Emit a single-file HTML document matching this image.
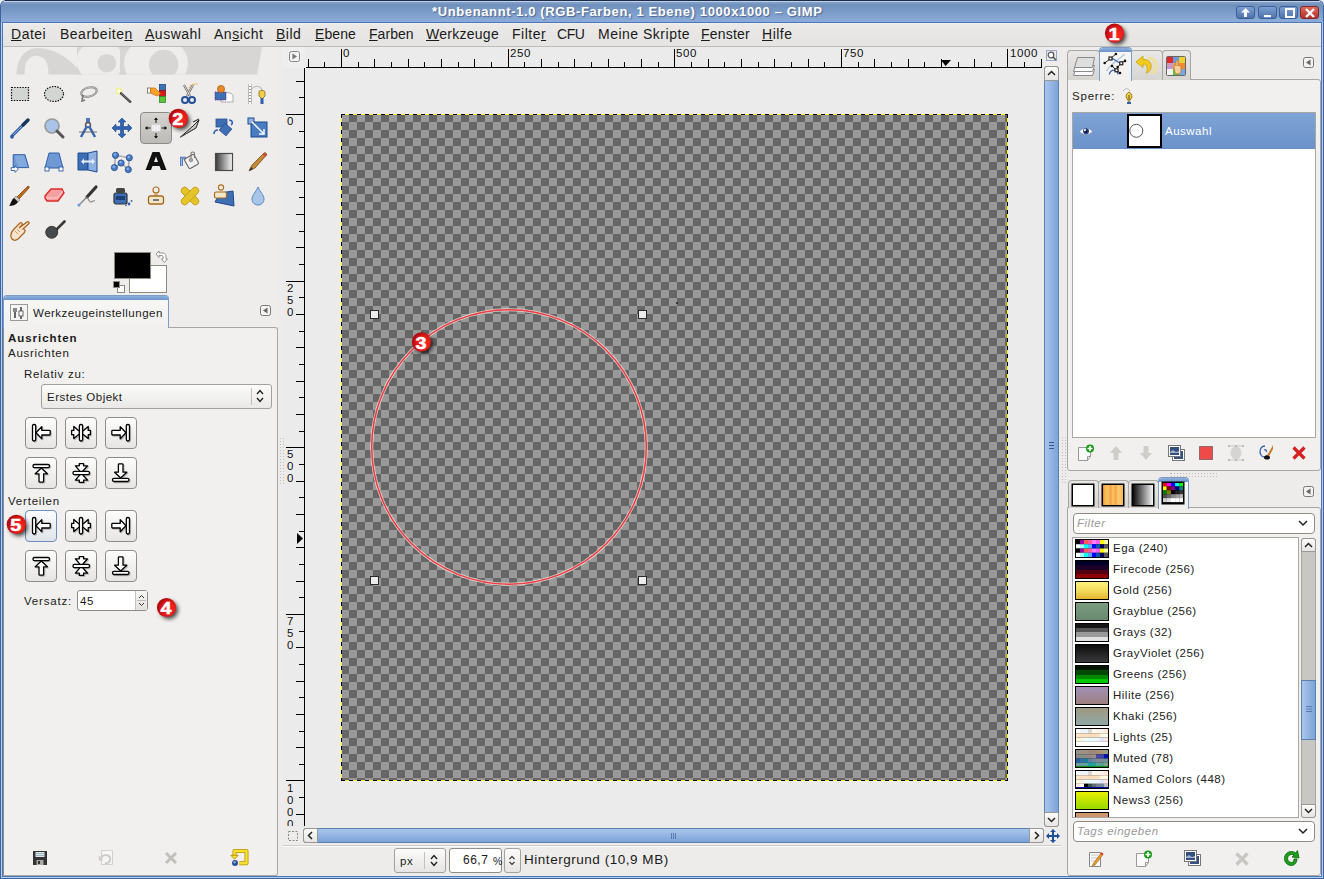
<!DOCTYPE html>
<html><head><meta charset="utf-8">
<style>
*{margin:0;padding:0;box-sizing:border-box}
html,body{width:1324px;height:879px;overflow:hidden;background:#f0efed;font-family:"Liberation Sans",sans-serif;color:#1a1a1a}
.a{position:absolute}
.t{position:absolute;white-space:nowrap;font-size:13px;line-height:15px}
#frame{left:0;top:0;width:1324px;height:879px;background:#3d629e;border-radius:6px 6px 0 0}
#frame2{left:1px;top:1px;width:1322px;height:877px;background:#b2cef0;border-radius:5px 5px 0 0}
#frame3{left:2px;top:2px;width:1320px;height:875px;background:#4a78b8;border-radius:4px 4px 0 0}
#title{left:1px;top:1px;width:1322px;height:21px;background:linear-gradient(#8ea8cc 0,#7090bc 4px,#8cacda);border-radius:5px 5px 0 0}
#ttext{left:432px;top:4px;color:#fff;font-weight:bold;font-size:13px;letter-spacing:0.62px;text-shadow:1px 1px 1px rgba(40,60,100,0.6)}
.wb{top:6px;width:19px;height:13px;border-radius:3px;background:linear-gradient(#7da0d2,#4d73ad);border:1px solid #3a5f98}
#menubar{left:3px;top:23px;width:1318px;height:24px;background:linear-gradient(#f3f0ec 0,#eae9e7 2px,#e5e4e2);border-bottom:1px solid #bebcb9}
.m{top:27px;font-size:14px;letter-spacing:0.5px}
.rl{font-size:11.5px;line-height:11px;color:#111;letter-spacing:0.6px}
.m u{text-decoration:underline;text-underline-offset:1px;text-decoration-thickness:1px}
#content{left:3px;top:47px;width:1318px;height:829px;background:#edecea}
</style></head><body>
<div id="frame" class="a"></div><div id="frame2" class="a"></div><div id="frame3" class="a"></div>
<div id="title" class="a"></div><div class="a" style="left:5px;top:0;width:1314px;height:1px;background:#1f2b42"></div><div class="a" style="left:4px;top:1px;width:1316px;height:1px;background:#b9d2f2"></div>
<div id="ttext" class="t">*Unbenannt-1.0 (RGB-Farben, 1 Ebene) 1000x1000 – GIMP</div>
<div class="a wb" style="left:1236px"></div>
<div class="a wb" style="left:1258px"></div>
<div class="a wb" style="left:1279px"></div>
<div class="a wb" style="left:1300px;background:linear-gradient(#e06a5e,#b3302a);border-color:#8a2520"></div>
<svg class="a" style="left:1236px;top:5px" width="84" height="15">
<path d="M9.5 3 L14 7.5 L11 7.5 L11 12 L8 12 L8 7.5 L5 7.5Z" fill="#fff"/>
<rect x="28" y="10" width="7" height="2.2" fill="#fff"/>
<rect x="50" y="4" width="8" height="8" fill="none" stroke="#fff" stroke-width="2"/>
<path d="M70 4 L78 12 M78 4 L70 12" stroke="#fff" stroke-width="2.4"/>
</svg>
<div id="menubar" class="a"></div>
<div class="t m" style="left:11px"><u>D</u>atei</div>
<div class="t m" style="left:60px">Bearbeite<u>n</u></div>
<div class="t m" style="left:145px"><u>A</u>uswahl</div>
<div class="t m" style="left:214px">An<u>s</u>icht</div>
<div class="t m" style="left:276px"><u>B</u>ild</div>
<div class="t m" style="left:315px;letter-spacing:0.1px"><u>E</u>bene</div>
<div class="t m" style="left:369px;letter-spacing:0.05px"><u>F</u>arben</div>
<div class="t m" style="left:426px;letter-spacing:0.27px"><u>W</u>erkzeuge</div>
<div class="t m" style="left:512px">Filte<u>r</u></div>
<div class="t m" style="left:557px;letter-spacing:-0.4px">CFU</div>
<div class="t m" style="left:598px">Meine Skripte</div>
<div class="t m" style="left:701px;letter-spacing:0.2px"><u>F</u>enster</div>
<div class="t m" style="left:762px"><u>H</u>ilfe</div>
<div id="content" class="a"></div>

<!-- TOOLBOX -->
<div class="a" style="left:3px;top:47px;width:275px;height:829px;background:#efedeb"></div>
<svg class="a" style="left:0;top:47px" width="280" height="28">
<defs><clipPath id="wc"><rect x="0" y="0" width="280" height="27.6"/></clipPath></defs>
<g clip-path="url(#wc)">
<path fill="#d7d6d4" d="M16.4 28 C17 10 26 1 38 1 C52 1 70 10 83 28 L48.3 28 L48.3 24 C48.3 14 43 8.8 36.5 8.8 C30 8.8 24.7 14 24.7 24 L24.7 28 Z"/>
<rect x="77" y="0" width="50" height="28" fill="#d7d6d4"/>
<ellipse cx="100" cy="14" rx="23.5" ry="21" fill="#efedeb"/>
<circle cx="106.8" cy="16.2" r="9.3" fill="#d7d6d4"/>
<path fill="#d7d6d4" d="M120 0 L262 0 L257 28 L120 28Z"/>
<ellipse cx="156" cy="16" rx="32" ry="26" fill="#efedeb"/>
<circle cx="163.6" cy="17.4" r="14.7" fill="#d7d6d4"/>
</g>
</svg>
<!--IMGWIN-->
<div class="a" style="left:278px;top:47px;width:785px;height:829px;background:#edecea"></div>
<div class="a" style="left:283px;top:47px;width:760px;height:780px;background:#ebebeb"></div>
<div class="a" style="left:283px;top:47px;width:22px;height:21px;background:#eeeeee"></div>
<svg class="a" style="left:289px;top:51px" width="12" height="12"><rect x="0.5" y="0.5" width="10" height="10" rx="2" fill="#f3f3f3" stroke="#888"/><path d="M3.5 2.5 L8 5.5 L3.5 8.5Z" fill="#777"/></svg>
<div class="a" style="left:306px;top:67px;width:736px;height:1px;background:#000"></div>
<div class="a" style="left:304px;top:68px;width:1px;height:758px;background:#000"></div>
<div class="a" style="left:308px;top:59px;width:1px;height:8px;background:#000"></div>
<div class="a" style="left:324px;top:62px;width:1px;height:5px;background:#000"></div>
<div class="a" style="left:341px;top:49px;width:1px;height:18px;background:#000"></div>
<div class="a" style="left:358px;top:62px;width:1px;height:5px;background:#000"></div>
<div class="a" style="left:374px;top:59px;width:1px;height:8px;background:#000"></div>
<div class="a" style="left:391px;top:62px;width:1px;height:5px;background:#000"></div>
<div class="a" style="left:408px;top:59px;width:1px;height:8px;background:#000"></div>
<div class="a" style="left:424px;top:62px;width:1px;height:5px;background:#000"></div>
<div class="a" style="left:441px;top:59px;width:1px;height:8px;background:#000"></div>
<div class="a" style="left:458px;top:62px;width:1px;height:5px;background:#000"></div>
<div class="a" style="left:474px;top:59px;width:1px;height:8px;background:#000"></div>
<div class="a" style="left:491px;top:62px;width:1px;height:5px;background:#000"></div>
<div class="a" style="left:508px;top:49px;width:1px;height:18px;background:#000"></div>
<div class="a" style="left:524px;top:62px;width:1px;height:5px;background:#000"></div>
<div class="a" style="left:541px;top:59px;width:1px;height:8px;background:#000"></div>
<div class="a" style="left:558px;top:62px;width:1px;height:5px;background:#000"></div>
<div class="a" style="left:574px;top:59px;width:1px;height:8px;background:#000"></div>
<div class="a" style="left:591px;top:62px;width:1px;height:5px;background:#000"></div>
<div class="a" style="left:608px;top:59px;width:1px;height:8px;background:#000"></div>
<div class="a" style="left:624px;top:62px;width:1px;height:5px;background:#000"></div>
<div class="a" style="left:641px;top:59px;width:1px;height:8px;background:#000"></div>
<div class="a" style="left:658px;top:62px;width:1px;height:5px;background:#000"></div>
<div class="a" style="left:674px;top:49px;width:1px;height:18px;background:#000"></div>
<div class="a" style="left:691px;top:62px;width:1px;height:5px;background:#000"></div>
<div class="a" style="left:708px;top:59px;width:1px;height:8px;background:#000"></div>
<div class="a" style="left:724px;top:62px;width:1px;height:5px;background:#000"></div>
<div class="a" style="left:741px;top:59px;width:1px;height:8px;background:#000"></div>
<div class="a" style="left:758px;top:62px;width:1px;height:5px;background:#000"></div>
<div class="a" style="left:774px;top:59px;width:1px;height:8px;background:#000"></div>
<div class="a" style="left:791px;top:62px;width:1px;height:5px;background:#000"></div>
<div class="a" style="left:808px;top:59px;width:1px;height:8px;background:#000"></div>
<div class="a" style="left:824px;top:62px;width:1px;height:5px;background:#000"></div>
<div class="a" style="left:841px;top:49px;width:1px;height:18px;background:#000"></div>
<div class="a" style="left:858px;top:62px;width:1px;height:5px;background:#000"></div>
<div class="a" style="left:874px;top:59px;width:1px;height:8px;background:#000"></div>
<div class="a" style="left:891px;top:62px;width:1px;height:5px;background:#000"></div>
<div class="a" style="left:908px;top:59px;width:1px;height:8px;background:#000"></div>
<div class="a" style="left:924px;top:62px;width:1px;height:5px;background:#000"></div>
<div class="a" style="left:941px;top:59px;width:1px;height:8px;background:#000"></div>
<div class="a" style="left:958px;top:62px;width:1px;height:5px;background:#000"></div>
<div class="a" style="left:974px;top:59px;width:1px;height:8px;background:#000"></div>
<div class="a" style="left:991px;top:62px;width:1px;height:5px;background:#000"></div>
<div class="a" style="left:1007px;top:49px;width:1px;height:18px;background:#000"></div>
<div class="a" style="left:1024px;top:62px;width:1px;height:5px;background:#000"></div>
<div class="a" style="left:1041px;top:59px;width:1px;height:8px;background:#000"></div>
<div class="a" style="left:1041px;top:59px;width:1px;height:8px;background:#000"></div>
<div class="t rl" style="left:343px;top:48px">0</div>
<div class="t rl" style="left:510px;top:48px">250</div>
<div class="t rl" style="left:676px;top:48px">500</div>
<div class="t rl" style="left:843px;top:48px">750</div>
<div class="t rl" style="left:1010px;top:48px">1000</div>
<div class="a" style="left:296px;top:81px;width:8px;height:1px;background:#000"></div>
<div class="a" style="left:299px;top:97px;width:5px;height:1px;background:#000"></div>
<div class="a" style="left:286px;top:114px;width:18px;height:1px;background:#000"></div>
<div class="a" style="left:299px;top:131px;width:5px;height:1px;background:#000"></div>
<div class="a" style="left:296px;top:147px;width:8px;height:1px;background:#000"></div>
<div class="a" style="left:299px;top:164px;width:5px;height:1px;background:#000"></div>
<div class="a" style="left:296px;top:181px;width:8px;height:1px;background:#000"></div>
<div class="a" style="left:299px;top:197px;width:5px;height:1px;background:#000"></div>
<div class="a" style="left:296px;top:214px;width:8px;height:1px;background:#000"></div>
<div class="a" style="left:299px;top:231px;width:5px;height:1px;background:#000"></div>
<div class="a" style="left:296px;top:247px;width:8px;height:1px;background:#000"></div>
<div class="a" style="left:299px;top:264px;width:5px;height:1px;background:#000"></div>
<div class="a" style="left:286px;top:281px;width:18px;height:1px;background:#000"></div>
<div class="a" style="left:299px;top:297px;width:5px;height:1px;background:#000"></div>
<div class="a" style="left:296px;top:314px;width:8px;height:1px;background:#000"></div>
<div class="a" style="left:299px;top:331px;width:5px;height:1px;background:#000"></div>
<div class="a" style="left:296px;top:347px;width:8px;height:1px;background:#000"></div>
<div class="a" style="left:299px;top:364px;width:5px;height:1px;background:#000"></div>
<div class="a" style="left:296px;top:381px;width:8px;height:1px;background:#000"></div>
<div class="a" style="left:299px;top:397px;width:5px;height:1px;background:#000"></div>
<div class="a" style="left:296px;top:414px;width:8px;height:1px;background:#000"></div>
<div class="a" style="left:299px;top:431px;width:5px;height:1px;background:#000"></div>
<div class="a" style="left:286px;top:447px;width:18px;height:1px;background:#000"></div>
<div class="a" style="left:299px;top:464px;width:5px;height:1px;background:#000"></div>
<div class="a" style="left:296px;top:481px;width:8px;height:1px;background:#000"></div>
<div class="a" style="left:299px;top:497px;width:5px;height:1px;background:#000"></div>
<div class="a" style="left:296px;top:514px;width:8px;height:1px;background:#000"></div>
<div class="a" style="left:299px;top:531px;width:5px;height:1px;background:#000"></div>
<div class="a" style="left:296px;top:547px;width:8px;height:1px;background:#000"></div>
<div class="a" style="left:299px;top:564px;width:5px;height:1px;background:#000"></div>
<div class="a" style="left:296px;top:581px;width:8px;height:1px;background:#000"></div>
<div class="a" style="left:299px;top:597px;width:5px;height:1px;background:#000"></div>
<div class="a" style="left:286px;top:614px;width:18px;height:1px;background:#000"></div>
<div class="a" style="left:299px;top:631px;width:5px;height:1px;background:#000"></div>
<div class="a" style="left:296px;top:647px;width:8px;height:1px;background:#000"></div>
<div class="a" style="left:299px;top:664px;width:5px;height:1px;background:#000"></div>
<div class="a" style="left:296px;top:681px;width:8px;height:1px;background:#000"></div>
<div class="a" style="left:299px;top:697px;width:5px;height:1px;background:#000"></div>
<div class="a" style="left:296px;top:714px;width:8px;height:1px;background:#000"></div>
<div class="a" style="left:299px;top:731px;width:5px;height:1px;background:#000"></div>
<div class="a" style="left:296px;top:747px;width:8px;height:1px;background:#000"></div>
<div class="a" style="left:299px;top:764px;width:5px;height:1px;background:#000"></div>
<div class="a" style="left:286px;top:780px;width:18px;height:1px;background:#000"></div>
<div class="a" style="left:299px;top:797px;width:5px;height:1px;background:#000"></div>
<div class="a" style="left:296px;top:814px;width:8px;height:1px;background:#000"></div>
<div class="t rl" style="left:287px;top:115px;line-height:12px;letter-spacing:0;clip-path:inset(0 0 0px 0)">0</div>
<div class="t rl" style="left:287px;top:282px;line-height:12px;letter-spacing:0;clip-path:inset(0 0 0px 0)">2<br>5<br>0</div>
<div class="t rl" style="left:287px;top:448px;line-height:12px;letter-spacing:0;clip-path:inset(0 0 0px 0)">5<br>0<br>0</div>
<div class="t rl" style="left:287px;top:615px;line-height:12px;letter-spacing:0;clip-path:inset(0 0 0px 0)">7<br>5<br>0</div>
<div class="t rl" style="left:287px;top:782px;line-height:12px;letter-spacing:0;clip-path:inset(0 0 4px 0)">1<br>0<br>0<br>0</div>
<!-- canvas -->
<div class="a" style="left:341px;top:114px;width:667px;height:667px;background:repeating-conic-gradient(#666 0 25%,#999 0 50%) 0 0/16px 16px"></div>
<div class="a" style="left:341px;top:114px;width:667px;height:1px;background:repeating-linear-gradient(90deg,#000 0 4px,#ff0 4px 8px)"></div>
<div class="a" style="left:341px;top:780px;width:667px;height:1px;background:repeating-linear-gradient(90deg,#000 0 4px,#ff0 4px 8px)"></div>
<div class="a" style="left:341px;top:114px;width:1px;height:667px;background:repeating-linear-gradient(180deg,#000 0 4px,#ff0 4px 8px)"></div>
<div class="a" style="left:1007px;top:114px;width:1px;height:667px;background:repeating-linear-gradient(180deg,#000 0 4px,#ff0 4px 8px)"></div>
<svg class="a" style="left:341px;top:114px" width="667" height="667">
<circle cx="168" cy="333" r="137.3" fill="none" stroke="#f2f2f2" stroke-width="3" opacity="0.75"/>
<circle cx="168" cy="333" r="137.3" fill="none" stroke="#f4383c" stroke-width="1.5"/>
<rect x="29.5" y="196.5" width="8" height="8" fill="#ececec" stroke="#2a2a2a"/>
<rect x="297.5" y="196.5" width="8" height="8" fill="#ececec" stroke="#2a2a2a"/>
<rect x="29.5" y="462.5" width="8" height="8" fill="#ececec" stroke="#2a2a2a"/>
<rect x="297.5" y="462.5" width="8" height="8" fill="#ececec" stroke="#2a2a2a"/>
</svg>
<svg class="a" style="left:930px;top:55px" width="30" height="14"><path d="M11 5 L21 5 L15.6 11Z" fill="#000"/></svg>
<svg class="a" style="left:290px;top:528px" width="16" height="20"><path d="M7 5 L13 10.5 L7 16Z" fill="#000"/></svg>
<div class="a" style="left:676px;top:302px;width:2px;height:2px;background:#222;border-radius:1px"></div>
<!-- scrollbars -->
<svg class="a" style="left:1046px;top:50px" width="12" height="12"><rect x="0.5" y="0.5" width="10" height="10" fill="none" stroke="#3a6ab0" stroke-dasharray="1 1"/><circle cx="5" cy="5" r="2.8" fill="#fff" stroke="#555" stroke-width="1.2"/><path d="M7 7 L10 10" stroke="#555" stroke-width="1.6"/></svg>
<div class="a" style="left:1044px;top:66px;width:15px;height:761px;border:1px solid #5b80b2;border-radius:3px;background:linear-gradient(90deg,#a9c6ec,#7ea3d8)"></div>
<div class="a" style="left:1044px;top:66px;width:15px;height:15px;border:1px solid #9a9894;border-radius:3px 3px 0 0;background:linear-gradient(#fbfbfa,#e6e5e3)"></div>
<svg class="a" style="left:1044px;top:66px" width="15" height="15"><path d="M4 9 L7.5 5.5 L11 9" fill="none" stroke="#222" stroke-width="1.5"/></svg>
<div class="a" style="left:1044px;top:812px;width:15px;height:15px;border:1px solid #9a9894;border-radius:0 0 3px 3px;background:linear-gradient(#fbfbfa,#e6e5e3)"></div>
<svg class="a" style="left:1044px;top:812px" width="15" height="15"><path d="M4 6 L7.5 9.5 L11 6" fill="none" stroke="#222" stroke-width="1.5"/></svg>
<div class="a" style="left:303px;top:828px;width:741px;height:15px;border:1px solid #5b80b2;border-radius:3px;background:linear-gradient(#a9c6ec,#7ea3d8)"></div>
<div class="a" style="left:303px;top:828px;width:15px;height:15px;border:1px solid #9a9894;border-radius:3px 0 0 3px;background:linear-gradient(#fbfbfa,#e6e5e3)"></div>
<svg class="a" style="left:303px;top:828px" width="15" height="15"><path d="M9 4 L5.5 7.5 L9 11" fill="none" stroke="#222" stroke-width="1.5"/></svg>
<div class="a" style="left:1029px;top:828px;width:15px;height:15px;border:1px solid #9a9894;border-radius:0 3px 3px 0;background:linear-gradient(#fbfbfa,#e6e5e3)"></div>
<svg class="a" style="left:1029px;top:828px" width="15" height="15"><path d="M6 4 L9.5 7.5 L6 11" fill="none" stroke="#222" stroke-width="1.5"/></svg>
<svg class="a" style="left:1048px;top:440px" width="8" height="10"><path d="M1 2.5 L6 2.5 M1 5.5 L6 5.5 M1 8.5 L6 8.5" stroke="#3a5a8a" stroke-width="1"/></svg>
<svg class="a" style="left:670px;top:832px" width="8" height="8"><path d="M1.5 1 L1.5 7 M3.5 1 L3.5 7 M5.5 1 L5.5 7" stroke="#4a6fa6" stroke-width="0.8"/></svg>
<svg class="a" style="left:287px;top:830px" width="12" height="12"><rect x="1.5" y="1.5" width="9" height="9" fill="none" stroke="#888" stroke-dasharray="2 1.5"/></svg>
<svg class="a" style="left:1045px;top:828px" width="16" height="16"><path d="M8 1 L11 4 L9 4 L9 7 L12 7 L12 5 L15 8 L12 11 L12 9 L9 9 L9 12 L11 12 L8 15 L5 12 L7 12 L7 9 L4 9 L4 11 L1 8 L4 5 L4 7 L7 7 L7 4 L5 4Z" fill="#1f4f98"/></svg>
<div class="a" style="left:283px;top:845px;width:778px;height:1px;background:#cfcdca"></div>
<div class="a" style="left:283px;top:846px;width:778px;height:1px;background:#fbfbfa"></div>
<!-- status -->
<div class="a" style="left:394px;top:848px;width:52px;height:25px;border:1px solid #a4a19d;border-radius:3px;background:linear-gradient(#fbfbfa,#e6e5e3)"></div>
<div class="a" style="left:424px;top:852px;width:1px;height:17px;background:#c4c1bd"></div>
<div class="t" style="left:400px;top:854px;font-size:11.5px;letter-spacing:0.5px">px</div>
<svg class="a" style="left:428px;top:852px" width="12" height="17"><path d="M3 7 L6 3.5 L9 7 M3 10 L6 13.5 L9 10" fill="none" stroke="#222" stroke-width="1.4"/></svg>
<div class="a" style="left:449px;top:848px;width:53px;height:25px;border:1px solid #8f8c88;border-radius:3px;background:#fff"></div>
<div class="t" style="left:463px;top:853px;font-size:12px;letter-spacing:0.5px">66,7</div><div class="t" style="left:493px;top:854px;font-size:10.5px">%</div>
<div class="a" style="left:504px;top:848px;width:17px;height:25px;border:1px solid #a4a19d;border-radius:3px;background:linear-gradient(#fbfbfa,#e6e5e3)"></div>
<svg class="a" style="left:506px;top:852px" width="12" height="17"><path d="M3.5 7 L6 4.5 L8.5 7 M3.5 10 L6 12.5 L8.5 10" fill="none" stroke="#333" stroke-width="1.1"/></svg>
<div class="t" style="left:524px;top:852px;font-size:13.5px;letter-spacing:0.53px">Hintergrund (10,9 MB)</div>
<!--/IMGWIN-->
<!--DOCK-->
<div class="a" style="left:1063px;top:47px;width:258px;height:829px;background:#edecea"></div>
<div class="a" style="left:1067px;top:79px;width:254px;height:392px;border:1px solid #a9a6a2;border-radius:0 3px 3px 3px;background:#f1f0ee"></div>
<div class="a" style="left:1067px;top:50px;width:33px;height:30px;border:1px solid #a8a6a2;border-bottom:none;border-radius:4px 4px 0 0;background:linear-gradient(#e9e8e6,#d6d5d2)"></div>
<div class="a" style="left:1130px;top:50px;width:33px;height:30px;border:1px solid #a8a6a2;border-bottom:none;border-radius:4px 4px 0 0;background:linear-gradient(#e9e8e6,#d6d5d2)"></div>
<div class="a" style="left:1162px;top:50px;width:29px;height:30px;border:1px solid #a8a6a2;border-bottom:none;border-radius:4px 4px 0 0;background:linear-gradient(#e9e8e6,#d6d5d2)"></div>
<div class="a" style="left:1099px;top:47px;width:33px;height:34px;border:1px solid #7d9cc6;border-bottom:none;border-radius:4px 4px 0 0;background:linear-gradient(#f7f7f6,#f1f0ee)"></div><div class="a" style="left:1100px;top:48px;width:31px;height:4px;border-radius:3px 3px 0 0;background:linear-gradient(#8eb0de,#6b93cc)"></div>
<svg class="a" style="left:1071px;top:55px" width="26" height="22"><g stroke="#8a8a8a" stroke-width="1"><path d="M4.5 14.5 L23.5 14.5 L21.5 20.5 L2.5 20.5Z" fill="#fafafa"/><path d="M4.5 10.5 L23.5 10.5 L21.5 16.5 L2.5 16.5Z" fill="#fafafa"/><path d="M6.5 2.5 L23.5 2.5 L21.5 12.5 L3.5 12.5Z" fill="#dedede"/></g></svg>
<svg class="a" style="left:1100px;top:50px" width="30" height="28"><path d="M24.7 4.3 C18 10 10 14 6.5 21.2" fill="none" stroke="#b0c6e4" stroke-width="1.3"/><path d="M10.5 8.5 C14 8 17 12.5 21.3 13.3" fill="none" stroke="#3a66b0" stroke-width="1.2"/><path d="M9.2 24.5 C10 21 13 19.5 16.5 20.3 L18.3 24.5" fill="none" stroke="#3a66b0" stroke-width="1.2"/><path d="M4.7 13 L10.5 8.5 L15.9 4 M17.7 17 L21.3 13.3 L25 10.9 M12 16 L16.5 20.3 L20 23" fill="none" stroke="#111" stroke-width="0.9"/><g fill="#111"><circle cx="4.7" cy="13" r="1.3"/><circle cx="15.9" cy="4" r="1.3"/><circle cx="17.7" cy="17" r="1.3"/><circle cx="25" cy="10.9" r="1.3"/><circle cx="12" cy="16" r="1.3"/><circle cx="20" cy="23" r="1.3"/></g><g fill="#fff" stroke="#111" stroke-width="1.1"><rect x="9" y="7" width="3" height="3"/><rect x="19.8" y="11.8" width="3" height="3"/><rect x="15" y="18.8" width="3" height="3"/></g></svg>
<svg class="a" style="left:1134px;top:54px" width="26" height="22"><path d="M14 4 C20 4 23 9 22 14 C21 18 18 19 17 19" fill="none" stroke="#efe0a0" stroke-width="3.2"/><path d="M2 8 L9 2 L9 5.5 C15 5 18 9 17 14 C16 17 14 19 12 19 C14 16 14 10 9 10 L9 13.5 Z" fill="#f3cc1a" stroke="#c8a010" stroke-width="0.8"/></svg>
<svg class="a" style="left:1166px;top:56px" width="20" height="20"><rect x="1" y="1" width="6" height="6" fill="#e02828"/><rect x="7" y="1" width="6" height="6" fill="#6a9ad8"/><rect x="13" y="1" width="6" height="6" fill="#f0d030"/><rect x="1" y="7" width="6" height="6" fill="#c898c8"/><rect x="7" y="7" width="6" height="6" fill="#e8a050"/><rect x="13" y="7" width="6" height="6" fill="#f08a30"/><rect x="1" y="13" width="6" height="6" fill="#f2f2f2"/><rect x="7" y="13" width="6" height="6" fill="#60c040"/><rect x="13" y="13" width="6" height="6" fill="#78a8e0"/><rect x="0.5" y="0.5" width="19" height="19" fill="none" stroke="#666" rx="1"/><path d="M9 17 L8 10 C8 8 10 8 10 10 L10 6 C10 4 12 4 12 6 L12 10 C13 9 15 10 15 11 L15 15 C15 17 13 18 11 18Z" fill="#f8d0a0" stroke="#c87820" stroke-width="0.8"/></svg>
<svg class="a" style="left:1303px;top:57px" width="12" height="12"><rect x="0.5" y="0.5" width="10" height="10" rx="2" fill="#f3f2f0" stroke="#777"/><path d="M3 5.5 L7.5 2.5 L7.5 8.5Z" fill="#666"/></svg>
<div class="t" style="left:1072px;top:89px;font-size:11.5px;letter-spacing:0.8px">Sperre:</div>
<svg class="a" style="left:1120px;top:87px" width="18" height="18"><path d="M3 4 C5 1 9 1 10 4" fill="none" stroke="#aaa" stroke-width="0.8"/><path d="M9 5 C7 6 6 8 6 10 L9 15 L12 10 C12 8 11 6 9 5Z" fill="#f0d040" stroke="#907010" stroke-width="0.9"/><path d="M9 8 L9 13" stroke="#333" stroke-width="0.8"/><rect x="7" y="15" width="4" height="2" fill="#2f5fa8"/></svg>
<div class="a" style="left:1072px;top:112px;width:244px;height:326px;border:1px solid #a9a6a2;background:#fff"></div>
<div class="a" style="left:1073px;top:113px;width:242px;height:36px;background:linear-gradient(#7fa3d6,#6a91c9)"></div>
<svg class="a" style="left:1079px;top:125px" width="14" height="12"><path d="M0.8 6.5 C3.5 2.5 10.5 2.5 13.2 6.5 C10.5 10.5 3.5 10.5 0.8 6.5Z" fill="#fff" stroke="#999" stroke-width="0.6"/><circle cx="7" cy="6.3" r="3" fill="#1f3f8a"/><circle cx="6" cy="5.2" r="1.1" fill="#fff"/><circle cx="7.3" cy="6.6" r="1" fill="#000"/></svg>
<div class="a" style="left:1127px;top:114px;width:35px;height:34px;border:2px solid #000;background:#fff"></div>
<svg class="a" style="left:1127px;top:114px" width="35" height="34"><circle cx="9.3" cy="16.8" r="6.5" fill="none" stroke="#444" stroke-width="0.9"/></svg>
<div class="t" style="left:1165px;top:124px;font-size:11.5px;letter-spacing:0.5px;color:#fff">Auswahl</div>
<svg class="a" style="left:1077px;top:444px" width="18" height="18"><path d="M1.5 3.5 L13.5 3.5 L13.5 12.5 L10.5 16.5 L1.5 16.5Z" fill="#fafafa" stroke="#999"/><path d="M13.5 12.5 L10.5 12.5 L10.5 16.5" fill="none" stroke="#999"/><circle cx="13" cy="4.5" r="4" fill="#1a9a1a"/><path d="M13 2 L13 7 M10.5 4.5 L15.5 4.5" stroke="#fff" stroke-width="1.6"/></svg>
<svg class="a" style="left:1108px;top:445px" width="16" height="16"><path d="M8 1 L14 8 L10.5 8 L10.5 15 L5.5 15 L5.5 8 L2 8Z" fill="#cfcdca"/></svg>
<svg class="a" style="left:1138px;top:445px" width="16" height="16"><path d="M8 15 L14 8 L10.5 8 L10.5 1 L5.5 1 L5.5 8 L2 8Z" fill="#cfcdca"/></svg>
<svg class="a" style="left:1168px;top:445px" width="18" height="18"><rect x="4.5" y="4.5" width="12" height="11" fill="#fff" stroke="#777"/><rect x="6" y="6" width="9" height="8" fill="#34507e"/><rect x="0.5" y="0.5" width="12" height="11" fill="#fff" stroke="#777"/><rect x="2" y="2" width="9" height="8" fill="#34507e"/><path d="M2 7 L5 5 L8 7 L11 6 L11 8 L2 8Z" fill="#a0b0c8"/></svg>
<svg class="a" style="left:1198px;top:445px" width="16" height="16"><rect x="1.5" y="1.5" width="13" height="13" fill="#ef4a4a" stroke="#333" stroke-dasharray="1 1"/></svg>
<svg class="a" style="left:1227px;top:444px" width="18" height="18"><ellipse cx="9" cy="9" rx="5.5" ry="6.5" fill="#d6d4d2"/><path d="M2 2 L16 2 M2 16 L16 16" stroke="#c0bebb" stroke-width="0.8"/><g fill="#bdbbb8"><rect x="1" y="1" width="2" height="2"/><rect x="8" y="1" width="2" height="2"/><rect x="15" y="1" width="2" height="2"/><rect x="1" y="15" width="2" height="2"/><rect x="8" y="15" width="2" height="2"/><rect x="15" y="15" width="2" height="2"/></g></svg>
<svg class="a" style="left:1257px;top:443px" width="18" height="18"><path d="M8 3 C3 3 2 9 4 12 C6 15 9 14 10 12" fill="none" stroke="#3a66b0" stroke-width="1.3"/><path d="M7 7 C9 6 10 8 9 9" fill="none" stroke="#3a66b0" stroke-width="1.3"/><path d="M9 14 L15 4 L16 2 L16 6 L11 15Z" fill="#c87828"/><ellipse cx="10" cy="14.5" rx="3" ry="2" fill="#111"/></svg>
<svg class="a" style="left:1291px;top:445px" width="16" height="16"><path d="M2.5 2.5 L13.5 13.5 M13.5 2.5 L2.5 13.5" stroke="#d42020" stroke-width="3.2"/></svg>
<svg class="a" style="left:1170px;top:472px" width="48" height="6"><g fill="#b8b6b2"><rect x="0" y="1" width="1" height="1"/></g><path d="M1 1.5 L47 1.5 M1 4.5 L47 4.5" stroke="#bfbdb9" stroke-width="1" stroke-dasharray="1 2"/></svg>
<svg class="a" style="left:1061px;top:436px" width="6" height="48"><path d="M1.5 1 L1.5 47 M4.5 1 L4.5 47" stroke="#bfbdb9" stroke-width="1" stroke-dasharray="1 2"/></svg>
<svg class="a" style="left:278px;top:437px" width="7" height="48"><path d="M2.5 1 L2.5 47 M5.5 1 L5.5 47" stroke="#bfbdb9" stroke-width="1" stroke-dasharray="1 2"/></svg>
<div class="a" style="left:1067px;top:507px;width:254px;height:369px;border:1px solid #a9a6a2;border-radius:0 3px 3px 3px;background:#f1f0ee"></div>
<div class="a" style="left:1068px;top:480px;width:31px;height:28px;border:1px solid #a8a6a2;border-bottom:none;border-radius:4px 4px 0 0;background:linear-gradient(#e9e8e6,#d6d5d2)"></div>
<div class="a" style="left:1098px;top:480px;width:31px;height:28px;border:1px solid #a8a6a2;border-bottom:none;border-radius:4px 4px 0 0;background:linear-gradient(#e9e8e6,#d6d5d2)"></div>
<div class="a" style="left:1128px;top:480px;width:31px;height:28px;border:1px solid #a8a6a2;border-bottom:none;border-radius:4px 4px 0 0;background:linear-gradient(#e9e8e6,#d6d5d2)"></div>
<div class="a" style="left:1158px;top:477px;width:31px;height:32px;border:1px solid #7d9cc6;border-bottom:none;border-radius:4px 4px 0 0;background:linear-gradient(#f7f7f6,#f1f0ee)"></div><div class="a" style="left:1159px;top:478px;width:29px;height:4px;border-radius:3px 3px 0 0;background:linear-gradient(#8eb0de,#6b93cc)"></div>
<svg class="a" style="left:1071px;top:483px" width="24" height="24"><rect x="1.25" y="1.25" width="21.5" height="21.5" fill="#fff" stroke="#000" stroke-width="1.5"/></svg>
<svg class="a" style="left:1101px;top:483px" width="24" height="24"><defs><linearGradient id="wood" x1="0" x2="1" y1="0" y2="0"><stop offset="0" stop-color="#d07020"/><stop offset="0.12" stop-color="#fbb850"/><stop offset="0.3" stop-color="#f8c060"/><stop offset="0.38" stop-color="#f0a040"/><stop offset="0.5" stop-color="#fcc468"/><stop offset="0.62" stop-color="#f4a848"/><stop offset="0.75" stop-color="#fcc870"/><stop offset="1" stop-color="#f8b858"/></linearGradient></defs><rect x="1.25" y="1.25" width="21.5" height="21.5" fill="url(#wood)" stroke="#000" stroke-width="1.5"/></svg>
<svg class="a" style="left:1131px;top:483px" width="24" height="24"><defs><linearGradient id="bw" x1="0" x2="1" y1="0" y2="0"><stop offset="0" stop-color="#000"/><stop offset="1" stop-color="#fff"/></linearGradient></defs><rect x="1.25" y="1.25" width="21.5" height="21.5" fill="url(#bw)" stroke="#000" stroke-width="1.5"/></svg>
<svg class="a" style="left:1161px;top:481px" width="24" height="24"><rect x="1" y="1" width="22" height="22" fill="#000"/><rect x="1.5" y="1.5" width="4.3" height="4" fill="#f00"/><rect x="5.7" y="1.5" width="4.3" height="4" fill="#f0f"/><rect x="9.9" y="1.5" width="4.3" height="4" fill="#00f"/><rect x="14.1" y="1.5" width="4.3" height="4" fill="#0ff"/><rect x="18.3" y="1.5" width="4.3" height="4" fill="#0f0"/><rect x="1.5" y="5.4" width="4.3" height="4" fill="#ff0"/><rect x="5.7" y="5.4" width="4.3" height="4" fill="#800000"/><rect x="9.9" y="5.4" width="4.3" height="4" fill="#800080"/><rect x="14.1" y="5.4" width="4.3" height="4" fill="#000080"/><rect x="18.3" y="5.4" width="4.3" height="4" fill="#008080"/><rect x="1.5" y="9.3" width="4.3" height="4" fill="#008000"/><rect x="5.7" y="9.3" width="4.3" height="4" fill="#808000"/><rect x="9.9" y="9.3" width="4.3" height="4" fill="#000"/><rect x="14.1" y="9.3" width="4.3" height="4" fill="#202020"/><rect x="18.3" y="9.3" width="4.3" height="4" fill="#383838"/><rect x="1.5" y="13.2" width="4.3" height="4" fill="#505050"/><rect x="5.7" y="13.2" width="4.3" height="4" fill="#686868"/><rect x="9.9" y="13.2" width="4.3" height="4" fill="#888"/><rect x="14.1" y="13.2" width="4.3" height="4" fill="#a0a0a0"/><rect x="18.3" y="13.2" width="4.3" height="4" fill="#b8b8b8"/><rect x="1.5" y="17.1" width="4.3" height="4" fill="#d0d0d0"/><rect x="5.7" y="17.1" width="4.3" height="4" fill="#e0e0e0"/><rect x="9.9" y="17.1" width="4.3" height="4" fill="#fff"/><rect x="14.1" y="17.1" width="4.3" height="4" fill="#fff"/><rect x="18.3" y="17.1" width="4.3" height="4" fill="#fff"/><rect x="1.25" y="1.25" width="21.5" height="21.5" fill="none" stroke="#000" stroke-width="1.5"/></svg>
<svg class="a" style="left:1303px;top:486px" width="12" height="12"><rect x="0.5" y="0.5" width="10" height="10" rx="2" fill="#f3f2f0" stroke="#777"/><path d="M3 5.5 L7.5 2.5 L7.5 8.5Z" fill="#666"/></svg>
<div class="a" style="left:1073px;top:513px;width:242px;height:21px;border:1px solid #8f8c88;border-radius:4px;background:#fff"></div>
<div class="t" style="left:1077px;top:516px;font-size:11.5px;font-style:italic;color:#9a9a9a;letter-spacing:0.5px">Filter</div>
<svg class="a" style="left:1297px;top:518px" width="12" height="10"><path d="M2 3 L6 7 L10 3" fill="none" stroke="#222" stroke-width="1.5"/></svg>
<div class="a" style="left:1072px;top:537px;width:227px;height:281px;border:1px solid #a9a6a2;background:#fff;overflow:hidden">
<svg class="a" style="left:2px;top:1px" width="34" height="19"><rect x="0" y="0" width="34" height="19" fill="#000"/><g transform="translate(1,1)"><rect x="0" y="0.0" width="4" height="4.3" fill="#000"/><rect x="4" y="0.0" width="4" height="4.3" fill="#a000a8"/><rect x="8" y="0.0" width="4" height="4.3" fill="#ff5858"/><rect x="12" y="0.0" width="4" height="4.3" fill="#ff58a8"/><rect x="16" y="0.0" width="4" height="4.3" fill="#ff80ff"/><rect x="20" y="0.0" width="4" height="4.3" fill="#ff58ff"/><rect x="24" y="0.0" width="4" height="4.3" fill="#ffff00"/><rect x="28" y="0.0" width="4" height="4.3" fill="#ffff98"/><rect x="0" y="4.25" width="4" height="4.3" fill="#fff"/><rect x="4" y="4.25" width="4" height="4.3" fill="#a0ffff"/><rect x="8" y="4.25" width="4" height="4.3" fill="#00ffff"/><rect x="12" y="4.25" width="4" height="4.3" fill="#58a8ff"/><rect x="16" y="4.25" width="4" height="4.3" fill="#0000ff"/><rect x="20" y="4.25" width="4" height="4.3" fill="#0058a8"/><rect x="24" y="4.25" width="4" height="4.3" fill="#000058"/><rect x="28" y="4.25" width="4" height="4.3" fill="#585858"/><rect x="0" y="8.5" width="4" height="4.3" fill="#000"/><rect x="4" y="8.5" width="4" height="4.3" fill="#a000a8"/><rect x="8" y="8.5" width="4" height="4.3" fill="#ff5858"/><rect x="12" y="8.5" width="4" height="4.3" fill="#ff58a8"/><rect x="16" y="8.5" width="4" height="4.3" fill="#ff80ff"/><rect x="20" y="8.5" width="4" height="4.3" fill="#ff58ff"/><rect x="24" y="8.5" width="4" height="4.3" fill="#ffff00"/><rect x="28" y="8.5" width="4" height="4.3" fill="#ffff98"/><rect x="0" y="12.75" width="4" height="4.3" fill="#fff"/><rect x="4" y="12.75" width="4" height="4.3" fill="#a0ffff"/><rect x="8" y="12.75" width="4" height="4.3" fill="#00ffff"/><rect x="12" y="12.75" width="4" height="4.3" fill="#58a8ff"/><rect x="16" y="12.75" width="4" height="4.3" fill="#0000ff"/><rect x="20" y="12.75" width="4" height="4.3" fill="#0058a8"/><rect x="24" y="12.75" width="4" height="4.3" fill="#000058"/><rect x="28" y="12.75" width="4" height="4.3" fill="#585858"/></g></svg>
<div class="t" style="left:40px;top:3px;font-size:11.5px;letter-spacing:0.5px;color:#222">Ega (240)</div>
<div class="a" style="left:2px;top:22px;width:34px;height:19px;border:1px solid #000;background:linear-gradient(#000028 0 25%,#1a0028 25% 50%,#500010 50% 75%,#8c0000 75%)"></div>
<div class="t" style="left:40px;top:24px;font-size:11.5px;letter-spacing:0.5px;color:#222">Firecode (256)</div>
<div class="a" style="left:2px;top:43px;width:34px;height:19px;border:1px solid #000;background:linear-gradient(#fff27a,#f3dc5c 50%,#e2b432)"></div>
<div class="t" style="left:40px;top:45px;font-size:11.5px;letter-spacing:0.5px;color:#222">Gold (256)</div>
<div class="a" style="left:2px;top:64px;width:34px;height:19px;border:1px solid #000;background:linear-gradient(#7c9c80,#6a8a70)"></div>
<div class="t" style="left:40px;top:66px;font-size:11.5px;letter-spacing:0.5px;color:#222">Grayblue (256)</div>
<div class="a" style="left:2px;top:85px;width:34px;height:19px;border:1px solid #000;background:linear-gradient(#151515 0 25%,#555 25% 50%,#999 50% 75%,#e0e0e0 75%)"></div>
<div class="t" style="left:40px;top:87px;font-size:11.5px;letter-spacing:0.5px;color:#222">Grays (32)</div>
<div class="a" style="left:2px;top:106px;width:34px;height:19px;border:1px solid #000;background:linear-gradient(#0c0c0c,#3a3a3c)"></div>
<div class="t" style="left:40px;top:108px;font-size:11.5px;letter-spacing:0.5px;color:#222">GrayViolet (256)</div>
<div class="a" style="left:2px;top:127px;width:34px;height:19px;border:1px solid #000;background:linear-gradient(#001400 0 25%,#004a00 25% 50%,#008800 50% 75%,#00c800 75%)"></div>
<div class="t" style="left:40px;top:129px;font-size:11.5px;letter-spacing:0.5px;color:#222">Greens (256)</div>
<div class="a" style="left:2px;top:148px;width:34px;height:19px;border:1px solid #000;background:linear-gradient(#a290b8,#9e8080)"></div>
<div class="t" style="left:40px;top:150px;font-size:11.5px;letter-spacing:0.5px;color:#222">Hilite (256)</div>
<div class="a" style="left:2px;top:169px;width:34px;height:19px;border:1px solid #000;background:linear-gradient(#a09880,#90a8a8)"></div>
<div class="t" style="left:40px;top:171px;font-size:11.5px;letter-spacing:0.5px;color:#222">Khaki (256)</div>
<svg class="a" style="left:2px;top:190px" width="34" height="19"><rect x="0" y="0" width="34" height="19" fill="#000"/><g transform="translate(1,1)"><rect x="0" y="0.00" width="4.05" height="4.3" fill="#fffaf8"/><rect x="4" y="0.00" width="4.05" height="4.3" fill="#eef2fa"/><rect x="8" y="0.00" width="4.05" height="4.3" fill="#eef2fa"/><rect x="12" y="0.00" width="4.05" height="4.3" fill="#d8d8d8"/><rect x="16" y="0.00" width="4.05" height="4.3" fill="#fff8ee"/><rect x="20" y="0.00" width="4.05" height="4.3" fill="#fff2e6"/><rect x="24" y="0.00" width="4.05" height="4.3" fill="#fff0f0"/><rect x="28" y="0.00" width="4.05" height="4.3" fill="#ffe8d8"/><rect x="0" y="4.25" width="4.05" height="4.3" fill="#fde6c8"/><rect x="4" y="4.25" width="4.05" height="4.3" fill="#fde0c0"/><rect x="8" y="4.25" width="4.05" height="4.3" fill="#fde0c0"/><rect x="12" y="4.25" width="4.05" height="4.3" fill="#fcdcb8"/><rect x="16" y="4.25" width="4.05" height="4.3" fill="#fcdcb8"/><rect x="20" y="4.25" width="4.05" height="4.3" fill="#fde0c0"/><rect x="24" y="4.25" width="4.05" height="4.3" fill="#fff8e0"/><rect x="28" y="4.25" width="4.05" height="4.3" fill="#fffbea"/><rect x="0" y="8.50" width="4.05" height="4.3" fill="#fff8d0"/><rect x="4" y="8.50" width="4.05" height="4.3" fill="#fff0f0"/><rect x="8" y="8.50" width="4.05" height="4.3" fill="#eefff4"/><rect x="12" y="8.50" width="4.05" height="4.3" fill="#eafcff"/><rect x="16" y="8.50" width="4.05" height="4.3" fill="#eafcff"/><rect x="20" y="8.50" width="4.05" height="4.3" fill="#f0f4ff"/><rect x="24" y="8.50" width="4.05" height="4.3" fill="#e6e6fa"/><rect x="28" y="8.50" width="4.05" height="4.3" fill="#ffe4e1"/><rect x="0" y="12.75" width="4.05" height="4.3" fill="#ffffff"/><rect x="4" y="12.75" width="4.05" height="4.3" fill="#ffffff"/><rect x="8" y="12.75" width="4.05" height="4.3" fill="#ffffff"/><rect x="12" y="12.75" width="4.05" height="4.3" fill="#ffffff"/><rect x="16" y="12.75" width="4.05" height="4.3" fill="#ffffff"/><rect x="20" y="12.75" width="4.05" height="4.3" fill="#ffffff"/><rect x="24" y="12.75" width="4.05" height="4.3" fill="#ffffff"/><rect x="28" y="12.75" width="4.05" height="4.3" fill="#ffffff"/><rect x="0" y="16" width="32" height="1" fill="#fff"/></g></svg>
<div class="t" style="left:40px;top:192px;font-size:11.5px;letter-spacing:0.5px;color:#222">Lights (25)</div>
<svg class="a" style="left:2px;top:211px" width="34" height="19"><rect x="0" y="0" width="34" height="19" fill="#000"/><g transform="translate(1,1)"><rect x="0" y="0.00" width="4.05" height="4.3" fill="#9a9088"/><rect x="4" y="0.00" width="4.05" height="4.3" fill="#a09080"/><rect x="8" y="0.00" width="4.05" height="4.3" fill="#a09088"/><rect x="12" y="0.00" width="4.05" height="4.3" fill="#a08a80"/><rect x="16" y="0.00" width="4.05" height="4.3" fill="#a08a78"/><rect x="20" y="0.00" width="4.05" height="4.3" fill="#a88a70"/><rect x="24" y="0.00" width="4.05" height="4.3" fill="#a89078"/><rect x="28" y="0.00" width="4.05" height="4.3" fill="#a09880"/><rect x="0" y="4.25" width="4.05" height="4.3" fill="#908888"/><rect x="4" y="4.25" width="4.05" height="4.3" fill="#809090"/><rect x="8" y="4.25" width="4.05" height="4.3" fill="#908888"/><rect x="12" y="4.25" width="4.05" height="4.3" fill="#988880"/><rect x="16" y="4.25" width="4.05" height="4.3" fill="#909090"/><rect x="20" y="4.25" width="4.05" height="4.3" fill="#5048a0"/><rect x="24" y="4.25" width="4.05" height="4.3" fill="#3848a8"/><rect x="28" y="4.25" width="4.05" height="4.3" fill="#0010a8"/><rect x="0" y="8.50" width="4.05" height="4.3" fill="#2060a8"/><rect x="4" y="8.50" width="4.05" height="4.3" fill="#3870a0"/><rect x="8" y="8.50" width="4.05" height="4.3" fill="#1880a0"/><rect x="12" y="8.50" width="4.05" height="4.3" fill="#6080a0"/><rect x="16" y="8.50" width="4.05" height="4.3" fill="#7088a0"/><rect x="20" y="8.50" width="4.05" height="4.3" fill="#808898"/><rect x="24" y="8.50" width="4.05" height="4.3" fill="#808898"/><rect x="28" y="8.50" width="4.05" height="4.3" fill="#7090a0"/><rect x="0" y="12.75" width="4.05" height="4.3" fill="#7098a0"/><rect x="4" y="12.75" width="4.05" height="4.3" fill="#60a0a0"/><rect x="8" y="12.75" width="4.05" height="4.3" fill="#60a0a0"/><rect x="12" y="12.75" width="4.05" height="4.3" fill="#20a0a0"/><rect x="16" y="12.75" width="4.05" height="4.3" fill="#20a0a0"/><rect x="20" y="12.75" width="4.05" height="4.3" fill="#60a098"/><rect x="24" y="12.75" width="4.05" height="4.3" fill="#50a090"/><rect x="28" y="12.75" width="4.05" height="4.3" fill="#80a080"/><rect x="0" y="16" width="32" height="1" fill="#109010"/></g></svg>
<div class="t" style="left:40px;top:213px;font-size:11.5px;letter-spacing:0.5px;color:#222">Muted (78)</div>
<svg class="a" style="left:2px;top:232px" width="34" height="19"><rect x="0" y="0" width="34" height="19" fill="#000"/><g transform="translate(1,1)"><rect x="0" y="0.00" width="4.05" height="4.3" fill="#fffaf8"/><rect x="4" y="0.00" width="4.05" height="4.3" fill="#eef2fa"/><rect x="8" y="0.00" width="4.05" height="4.3" fill="#eef2fa"/><rect x="12" y="0.00" width="4.05" height="4.3" fill="#d8d8d8"/><rect x="16" y="0.00" width="4.05" height="4.3" fill="#fff8ee"/><rect x="20" y="0.00" width="4.05" height="4.3" fill="#fff2e6"/><rect x="24" y="0.00" width="4.05" height="4.3" fill="#fff0f0"/><rect x="28" y="0.00" width="4.05" height="4.3" fill="#ffe8d8"/><rect x="0" y="4.25" width="4.05" height="4.3" fill="#fde6c8"/><rect x="4" y="4.25" width="4.05" height="4.3" fill="#fde0c0"/><rect x="8" y="4.25" width="4.05" height="4.3" fill="#fde0c0"/><rect x="12" y="4.25" width="4.05" height="4.3" fill="#fcdcb8"/><rect x="16" y="4.25" width="4.05" height="4.3" fill="#fcdcb8"/><rect x="20" y="4.25" width="4.05" height="4.3" fill="#fde0c0"/><rect x="24" y="4.25" width="4.05" height="4.3" fill="#fff8e0"/><rect x="28" y="4.25" width="4.05" height="4.3" fill="#fffbea"/><rect x="0" y="8.50" width="4.05" height="4.3" fill="#fff8d0"/><rect x="4" y="8.50" width="4.05" height="4.3" fill="#fff0f0"/><rect x="8" y="8.50" width="4.05" height="4.3" fill="#eefff4"/><rect x="12" y="8.50" width="4.05" height="4.3" fill="#eafcff"/><rect x="16" y="8.50" width="4.05" height="4.3" fill="#eafcff"/><rect x="20" y="8.50" width="4.05" height="4.3" fill="#f0f4ff"/><rect x="24" y="8.50" width="4.05" height="4.3" fill="#e6e6fa"/><rect x="28" y="8.50" width="4.05" height="4.3" fill="#ffe4e1"/><rect x="0" y="12.75" width="4.05" height="4.3" fill="#ffe4e0"/><rect x="4" y="12.75" width="4.05" height="4.3" fill="#ffffff"/><rect x="8" y="12.75" width="4.05" height="4.3" fill="#000000"/><rect x="12" y="12.75" width="4.05" height="4.3" fill="#2f4f4f"/><rect x="16" y="12.75" width="4.05" height="4.3" fill="#696969"/><rect x="20" y="12.75" width="4.05" height="4.3" fill="#708090"/><rect x="24" y="12.75" width="4.05" height="4.3" fill="#778899"/><rect x="28" y="12.75" width="4.05" height="4.3" fill="#bebebe"/><rect x="0" y="16" width="32" height="1" fill="#0000a0"/></g></svg>
<div class="t" style="left:40px;top:234px;font-size:11.5px;letter-spacing:0.5px;color:#222">Named Colors (448)</div>
<div class="a" style="left:2px;top:253px;width:34px;height:19px;border:1px solid #000;background:linear-gradient(#e8f000,#98d800)"></div>
<div class="t" style="left:40px;top:255px;font-size:11.5px;letter-spacing:0.5px;color:#222">News3 (256)</div>
<div class="a" style="left:2px;top:274px;width:34px;height:19px;border:1px solid #000;background:linear-gradient(#d09870,#c89068)"></div>
</div>
<div class="a" style="left:1301px;top:538px;width:15px;height:280px;border:1px solid #a9a6a2;border-radius:3px;background:#c9c7c4"></div>
<div class="a" style="left:1301px;top:680px;width:15px;height:60px;border:1px solid #5b80b2;border-radius:0;background:linear-gradient(90deg,#a9c6ec,#7ea3d8)"></div>
<svg class="a" style="left:1305px;top:704px" width="8" height="10"><path d="M1 2.5 L7 2.5 M1 5 L7 5 M1 7.5 L7 7.5" stroke="#4a6fa6" stroke-width="0.8"/></svg>
<div class="a" style="left:1301px;top:538px;width:15px;height:14px;border:1px solid #9a9894;border-radius:3px 3px 0 0;background:linear-gradient(#fbfbfa,#e6e5e3)"></div>
<svg class="a" style="left:1301px;top:538px" width="15" height="14"><path d="M4 9 L7.5 5.5 L11 9" fill="none" stroke="#222" stroke-width="1.5"/></svg>
<div class="a" style="left:1301px;top:804px;width:15px;height:14px;border:1px solid #9a9894;border-radius:0 0 3px 3px;background:linear-gradient(#fbfbfa,#e6e5e3)"></div>
<svg class="a" style="left:1301px;top:804px" width="15" height="14"><path d="M4 5 L7.5 8.5 L11 5" fill="none" stroke="#222" stroke-width="1.5"/></svg>
<div class="a" style="left:1073px;top:821px;width:242px;height:21px;border:1px solid #8f8c88;border-radius:4px;background:#fff"></div>
<div class="t" style="left:1077px;top:824px;font-size:11.5px;font-style:italic;color:#9a9a9a;letter-spacing:0.5px">Tags eingeben</div>
<svg class="a" style="left:1297px;top:826px" width="12" height="10"><path d="M2 3 L6 7 L10 3" fill="none" stroke="#222" stroke-width="1.5"/></svg>
<svg class="a" style="left:1087px;top:850px" width="18" height="18"><path d="M2.5 2.5 L13.5 2.5 L13.5 16.5 L2.5 16.5Z" fill="#fafafa" stroke="#888"/><path d="M4 5 L11 5 M4 8 L11 8 M4 11 L8 11" stroke="#bbb" stroke-width="0.8"/><path d="M6 14 L14 3 L16 4.5 L8 15 L5.5 16Z" fill="#e89a2a" stroke="#a05a10" stroke-width="0.6"/><path d="M14 3 L16 4.5" stroke="#e03030" stroke-width="1.6"/></svg>
<svg class="a" style="left:1135px;top:850px" width="18" height="18"><path d="M1.5 3.5 L13.5 3.5 L13.5 12.5 L10.5 16.5 L1.5 16.5Z" fill="#fafafa" stroke="#999"/><path d="M13.5 12.5 L10.5 12.5 L10.5 16.5" fill="none" stroke="#999"/><circle cx="13" cy="4.5" r="4" fill="#1a9a1a"/><path d="M13 2 L13 7 M10.5 4.5 L15.5 4.5" stroke="#fff" stroke-width="1.6"/></svg>
<svg class="a" style="left:1184px;top:850px" width="18" height="18"><rect x="4.5" y="4.5" width="12" height="11" fill="#fff" stroke="#777"/><rect x="6" y="6" width="9" height="8" fill="#34507e"/><rect x="0.5" y="0.5" width="12" height="11" fill="#fff" stroke="#777"/><rect x="2" y="2" width="9" height="8" fill="#34507e"/><path d="M2 7 L5 5 L8 7 L11 6 L11 8 L2 8Z" fill="#a0b0c8"/></svg>
<svg class="a" style="left:1234px;top:851px" width="16" height="16"><path d="M2.5 2.5 L13.5 13.5 M13.5 2.5 L2.5 13.5" stroke="#c8c6c3" stroke-width="3.2"/></svg>
<svg class="a" style="left:1282px;top:849px" width="19" height="19"><path d="M15 10 C15 14 12 16.5 9.5 16.5 C5.5 16.5 2.5 13.5 2.5 9.5 C2.5 5.5 5.5 2.5 9.5 2.5 C11 2.5 12.5 3 13.5 4 L15.5 1.5 L17 9 L10 8 L12 6 C11.5 5.7 10.5 5.5 9.5 5.5 C7.3 5.5 5.5 7.3 5.5 9.5 C5.5 11.7 7.3 13.5 9.5 13.5 C11 13.5 12 12.3 12 10Z" fill="#1aa01a" stroke="#0a600a" stroke-width="0.8"/></svg>
<!--/DOCK-->
<!--ICONS-->
<div class="a" style="left:140px;top:112px;width:32px;height:32px;border-radius:4px;border:1px solid #8e8c89;background:linear-gradient(#d6d4d1,#bcbab7)"></div>
<svg class="a" style="left:144px;top:116px" width="24" height="24"><rect x="7.5" y="8.5" width="9" height="7" fill="#eee" stroke="#ccc" stroke-width="0.6"/><path d="M12 2 L12 7 M12 17 L12 22 M1.5 12 L6.5 12 M17.5 12 L22.5 12" stroke="#111" stroke-width="1"/><path d="M12 1.5 L10 4 L14 4Z M12 22.5 L10 20 L14 20Z M1 12 L3.5 10 L3.5 14Z M23 12 L20.5 10 L20.5 14Z" fill="#111"/></svg>
<svg class="a" style="left:8px;top:81.5px" width="24" height="24"><rect x="3.5" y="5.5" width="17" height="13" fill="#d3d5d2" stroke="#111" stroke-width="1.2" stroke-dasharray="1.5 1.2"/></svg>
<svg class="a" style="left:42px;top:81.5px" width="24" height="24"><ellipse cx="12" cy="12" rx="9.5" ry="7.5" fill="#d3d5d2" stroke="#111" stroke-width="1.2" stroke-dasharray="1.5 1.2"/></svg>
<svg class="a" style="left:76px;top:81.5px" width="24" height="24"><ellipse cx="13" cy="10" rx="8" ry="4.5" fill="none" stroke="#777" stroke-width="2" transform="rotate(-15 13 10)"/><ellipse cx="13" cy="10" rx="8" ry="4.5" fill="none" stroke="#ccc" stroke-width="0.8" transform="rotate(-15 13 10)"/><path d="M7 13 L6 19 L9 18" fill="none" stroke="#777" stroke-width="1.6"/></svg>
<svg class="a" style="left:110px;top:81.5px" width="24" height="24"><circle cx="9.1" cy="9.2" r="3.6" fill="#f4f080" opacity="0.75"/><circle cx="9.1" cy="9.2" r="1.6" fill="#fff"/><path d="M11 11.3 L20.3 19.8" stroke="#3a3a3a" stroke-width="2.4" stroke-linecap="round"/><path d="M11 11.3 L20.3 19.8" stroke="#9a9a8a" stroke-width="0.7"/></svg>
<svg class="a" style="left:144px;top:81.5px" width="24" height="24"><rect x="15.5" y="2.5" width="6" height="6" fill="#3f71b8" stroke="#1f4a8a" stroke-width="0.8"/><rect x="15.5" y="8.5" width="6" height="6" fill="#d21c1c" stroke="#8a1010" stroke-width="0.8"/><rect x="15.5" y="14.5" width="6" height="6" fill="#5cc33a" stroke="#2f8a1a" stroke-width="0.8"/><rect x="3.5" y="6" width="3" height="5" fill="#fff" stroke="#555" stroke-width="0.7"/><path d="M6.5 6 L11 6 L16.5 11.5 L13 14 L6.5 11 Z" fill="#f5a62a" stroke="#d86a10" stroke-width="0.8"/></svg>
<svg class="a" style="left:178px;top:81.5px" width="24" height="24"><path d="M6 3 L12 14 M15 3 L9 14" stroke="#666" stroke-width="2.2"/><path d="M6 3 L12 14 M15 3 L9 14" stroke="#eee" stroke-width="0.8"/><circle cx="7" cy="18" r="3" fill="none" stroke="#27509a" stroke-width="2"/><circle cx="14" cy="18" r="3" fill="none" stroke="#27509a" stroke-width="2"/><path d="M11 8 C11 3 14 2 20 2" fill="none" stroke="#e59a1c" stroke-width="1" stroke-dasharray="1.2 0.8"/></svg>
<svg class="a" style="left:212px;top:81.5px" width="24" height="24"><path d="M10 14 C10 11 14 10 17 11 C20 11 21 13 21 15 L21 20 L9 20 Z" fill="#fff" stroke="#999" stroke-width="0.8"/><rect x="3" y="10" width="11" height="8" fill="#3e6fb5" stroke="#6a2a7a" stroke-width="0.8" stroke-dasharray="1 0.6"/><circle cx="9" cy="7" r="3.6" fill="#e48a2a" stroke="#b25a10" stroke-width="0.7"/></svg>
<svg class="a" style="left:246px;top:81.5px" width="24" height="24"><path d="M4 2 L4 22" stroke="#999" stroke-width="3.2"/><path d="M4 2 L4 22" stroke="#fff" stroke-width="2" stroke-dasharray="2 1"/><path d="M5 8 C8 3 14 3 16 8" fill="none" stroke="#bbb" stroke-width="1.2"/><path d="M13 10 C13 8 19 8 19 10 L19 14 L16 17 L13 14 Z" fill="#f0d04a" stroke="#8a6a10" stroke-width="0.8"/><rect x="14.5" y="16" width="3" height="6" fill="#2f5fa8"/></svg>
<svg class="a" style="left:8px;top:115.5px" width="24" height="24"><path d="M4 20 L16 8" stroke="#2a5aa0" stroke-width="3" stroke-linecap="round"/><path d="M5 19 L15 9" stroke="#8fb4e2" stroke-width="1"/><path d="M15 9 L20 4" stroke="#16365e" stroke-width="3.5" stroke-linecap="round"/><circle cx="4" cy="21" r="1.8" fill="#2a5aa0"/></svg>
<svg class="a" style="left:42px;top:115.5px" width="24" height="24"><circle cx="10" cy="10" r="7" fill="#a9c4e8" stroke="#999" stroke-width="1.6"/><path d="M15 15 L21 21" stroke="#555" stroke-width="3" stroke-linecap="round"/></svg>
<svg class="a" style="left:76px;top:115.5px" width="24" height="24"><rect x="10" y="2" width="4" height="4" fill="#4d79bd"/><circle cx="12" cy="9" r="2.5" fill="none" stroke="#555" stroke-width="1.4"/><path d="M11 10 L5 21 M13 10 L19 21" stroke="#3d6ab0" stroke-width="2.6"/><path d="M3 16 L21 16" stroke="#555" stroke-width="0.8"/></svg>
<svg class="a" style="left:110px;top:115.5px" width="24" height="24"><path d="M12 2 L16 6 L13.5 6 L13.5 10.5 L18 10.5 L18 8 L22 12 L18 16 L18 13.5 L13.5 13.5 L13.5 18 L16 18 L12 22 L8 18 L10.5 18 L10.5 13.5 L6 13.5 L6 16 L2 12 L6 8 L6 10.5 L10.5 10.5 L10.5 6 L8 6 Z" fill="#2f63b0" stroke="#1d4a8e" stroke-width="0.6"/></svg>
<svg class="a" style="left:178px;top:115.5px" width="24" height="24"><path d="M2.5 21 L15 10 L21 4 L18 12 Z" fill="#c8c8c8" stroke="#222" stroke-width="1"/><path d="M2.5 21 L18 12" stroke="#555" stroke-width="0.8"/><path d="M15 6 L21 3" stroke="#333" stroke-width="1.2"/></svg>
<svg class="a" style="left:212px;top:115.5px" width="24" height="24"><rect x="4" y="3" width="11" height="8" fill="#3e6fb5" stroke="#2a5090" stroke-width="0.8"/><rect x="9" y="9" width="9" height="9" fill="#3e6fb5" stroke="#2a5090" stroke-width="0.8" transform="rotate(40 13.5 13.5)"/><path d="M17 4 C21 4 21 8 19 9" fill="none" stroke="#2f63b0" stroke-width="1.6"/><path d="M2 18 C2 15 4 14 6 14" fill="none" stroke="#2f63b0" stroke-width="1.6"/></svg>
<svg class="a" style="left:246px;top:115.5px" width="24" height="24"><rect x="5" y="6" width="16" height="15" fill="#4a7cc0" stroke="#1d4a8e" stroke-width="1"/><rect x="2" y="2" width="6" height="6" fill="#8fb0e0" stroke="#1d4a8e" stroke-width="1"/><path d="M6 6 L18 18" stroke="#fff" stroke-width="1.4"/><path d="M18 13 L18 18 L13 18" fill="none" stroke="#fff" stroke-width="1.4"/></svg>
<svg class="a" style="left:8px;top:149.5px" width="24" height="24"><path d="M5.2 4.7 L17 4.7 L20.7 17.6 L5.2 17.6 Z" fill="#6e99d4" stroke="#2f5fa8" stroke-width="1"/><path d="M6.5 5.5 L16 5.5 L19.5 16.8 L10 16.8 Z" fill="#8cb0e0" opacity="0.7"/><path d="M3.2 17.6 L7 17.6 L7 15.8 L10.4 19.1 L7 22.3 L7 20.5 L3.2 20.5 Z" fill="#fff" stroke="#2f5fa8" stroke-width="0.9"/></svg>
<svg class="a" style="left:42px;top:149.5px" width="24" height="24"><path d="M7 3 L17 3 L21 18 L3 18 Z" fill="#6e99d4" stroke="#2f5fa8" stroke-width="1"/><rect x="3" y="17" width="4" height="4" fill="#fff" stroke="#2f5fa8" stroke-width="0.9"/><rect x="17" y="17" width="4" height="4" fill="#fff" stroke="#2f5fa8" stroke-width="0.9"/></svg>
<svg class="a" style="left:76px;top:149.5px" width="24" height="24"><path d="M2 3 L12 3 L12 20 L2 20 Z" fill="#3e6fb5" stroke="#1d4a8e" stroke-width="1"/><path d="M12 3 L21 1 L21 22 L12 20 Z" fill="#8fb0e0" stroke="#1d4a8e" stroke-width="1"/><path d="M5 11.5 L8 8.5 L8 10.5 L16 10.5 L16 8.5 L19 11.5 L16 14.5 L16 12.5 L8 12.5 L8 14.5 Z" fill="#e8eef8"/></svg>
<svg class="a" style="left:110px;top:149.5px" width="24" height="24"><path d="M5.5 5.3 L19.3 7.8 L18.3 19.6 L11.1 13 L4.4 17.6 Z" fill="none" stroke="#aaa" stroke-width="1.6"/><circle cx="5.5" cy="5.3" r="3.1" fill="#4a7cc4" stroke="#1d4a8e" stroke-width="0.8"/><circle cx="4.9" cy="4.3999999999999995" r="1.2" fill="#8fb4e6"/><circle cx="19.3" cy="7.8" r="3.1" fill="#4a7cc4" stroke="#1d4a8e" stroke-width="0.8"/><circle cx="18.7" cy="6.8999999999999995" r="1.2" fill="#8fb4e6"/><circle cx="11.1" cy="13" r="3.1" fill="#4a7cc4" stroke="#1d4a8e" stroke-width="0.8"/><circle cx="10.5" cy="12.1" r="1.2" fill="#8fb4e6"/><circle cx="4.4" cy="17.6" r="3.1" fill="#4a7cc4" stroke="#1d4a8e" stroke-width="0.8"/><circle cx="3.8000000000000003" cy="16.700000000000003" r="1.2" fill="#8fb4e6"/><circle cx="18.3" cy="19.6" r="3.1" fill="#4a7cc4" stroke="#1d4a8e" stroke-width="0.8"/><circle cx="17.7" cy="18.700000000000003" r="1.2" fill="#8fb4e6"/></svg>
<svg class="a" style="left:144px;top:149.5px" width="24" height="24"><path d="M1.5 20 L8.5 2 L15.5 2 L22.5 20 L17 20 L15.5 16 L8.5 16 L7 20 Z M10 12 L14 12 L12 6.5 Z" fill="#111" fill-rule="evenodd"/></svg>
<svg class="a" style="left:178px;top:149.5px" width="24" height="24"><path d="M3.5 16 L3.5 8 L8 8" fill="none" stroke="#3a62b0" stroke-width="2.6"/><path d="M3.5 16 L3.5 8 L8 8" fill="none" stroke="#9ab8e8" stroke-width="1"/><rect x="8" y="6" width="11" height="11" rx="1.5" fill="#f2f2f2" stroke="#666" stroke-width="1.1" transform="rotate(-30 13.5 11.5)"/><circle cx="13" cy="10" r="1.8" fill="#aaa" stroke="#777" stroke-width="0.7"/><path d="M13 8 L13 3.5 C13 1.5 16.5 1.5 16.5 3.5 L16.5 8" fill="none" stroke="#777" stroke-width="1.1"/></svg>
<svg class="a" style="left:212px;top:149.5px" width="24" height="24"><defs><linearGradient id="gbl" x1="0" y1="0" x2="1" y2="0"><stop offset="0" stop-color="#3a3a3a"/><stop offset="1" stop-color="#f8f8f8"/></linearGradient></defs><rect x="3.5" y="3.5" width="17" height="17" fill="url(#gbl)" stroke="#4a4a4a" stroke-width="1.2"/></svg>
<svg class="a" style="left:246px;top:149.5px" width="24" height="24"><path d="M3 21 L6 15 L18 3 C19.5 2 21 3.5 20.5 5 L9 18 Z" fill="#c08a3a" stroke="#7a5218" stroke-width="0.8"/><path d="M17.5 3.5 L20 6" stroke="#e04040" stroke-width="2.2"/><path d="M3 21 L5 17 L7 19 Z" fill="#333"/></svg>
<svg class="a" style="left:8px;top:183.5px" width="24" height="24"><path d="M9 13 L20 2 C21 2 21.5 3 21 4 L11 15 Z" fill="#c06a1c" stroke="#7a4210" stroke-width="0.8"/><path d="M8 12 L12 16 L10 18 L6 14 Z" fill="#ccc" stroke="#777" stroke-width="0.6"/><path d="M6 14 L10 18 C8 21 4 22 1 22 C3 20 3 16 6 14Z" fill="#111"/></svg>
<svg class="a" style="left:42px;top:183.5px" width="24" height="24"><path d="M3 12 L9 5 L20 5 L22 9 L16 17 L5 17 L3 14 Z" fill="#f5a0a0" stroke="#e02828" stroke-width="1.4"/><path d="M4 14 L15 14 L21 7" fill="none" stroke="#fff" stroke-width="0.8" opacity="0.7"/></svg>
<svg class="a" style="left:76px;top:183.5px" width="24" height="24"><path d="M11 13 L20 3" stroke="#333" stroke-width="3.2" stroke-linecap="round"/><path d="M4 20 L11 13" stroke="#888" stroke-width="1.4"/><path d="M11 14 C14 15 12 18 15 18 C17 18 16 16 19 17" fill="none" stroke="#888" stroke-width="1.2"/><circle cx="3" cy="21" r="1.6" fill="#6e99d4"/></svg>
<svg class="a" style="left:110px;top:183.5px" width="24" height="24"><rect x="4" y="9" width="13" height="11" rx="2" fill="#3e6fb5" stroke="#333" stroke-width="1.2"/><rect x="6" y="4" width="9" height="5" rx="1.5" fill="#444"/><rect x="6" y="12" width="9" height="4" fill="#1d3f78"/><circle cx="19" cy="20" r="1.4" fill="#2f5fa8"/><circle cx="21.5" cy="17" r="0.9" fill="#2f5fa8"/><circle cx="16" cy="21.5" r="0.8" fill="#2f5fa8"/></svg>
<svg class="a" style="left:144px;top:183.5px" width="24" height="24"><circle cx="12" cy="6" r="3" fill="#eee" stroke="#b07020" stroke-width="1.2"/><path d="M11 9 L13 9 L13 12 L11 12Z" fill="#eee" stroke="#b07020" stroke-width="0.8"/><rect x="4.5" y="12" width="15" height="8" rx="2" fill="#efe6cc" stroke="#a86a1a" stroke-width="1.3"/><path d="M9 16 L15 16" stroke="#333" stroke-width="1.2"/></svg>
<svg class="a" style="left:178px;top:183.5px" width="24" height="24"><path d="M5 3 L21 19 M3 5 L19 21" stroke="#d8b820" stroke-width="0"/><rect x="1" y="8.5" width="22" height="7" rx="3.5" fill="#e5c42a" stroke="#b89a10" stroke-width="0.8" transform="rotate(45 12 12)"/><rect x="1" y="8.5" width="22" height="7" rx="3.5" fill="#e5c42a" stroke="#b89a10" stroke-width="0.8" transform="rotate(-45 12 12)"/></svg>
<svg class="a" style="left:212px;top:183.5px" width="24" height="24"><path d="M8 9 L21 7 L22 22 L3 18 Z" fill="#3e6fb5" stroke="#1d4a8e" stroke-width="1"/><circle cx="9" cy="3.5" r="2.6" fill="#eee" stroke="#b07020" stroke-width="1.1"/><rect x="2.5" y="8" width="12" height="6" rx="1.5" fill="#efe6cc" stroke="#a86a1a" stroke-width="1.2"/></svg>
<svg class="a" style="left:246px;top:183.5px" width="24" height="24"><path d="M12 3 C14 8 18 11 18 15 C18 19 15 21 12 21 C9 21 6 19 6 15 C6 11 10 8 12 3Z" fill="#a8c4e6" stroke="#5a86c0" stroke-width="1"/></svg>
<svg class="a" style="left:8px;top:217.5px" width="24" height="24"><path d="M4 21 C2 18 3 14 6 11 L12 5 C13 4 15 5 14 7 L11 10 L19 4 C20.5 3 22 5 20.5 6 L15 11 C17 11 18 13 16 15 L10 21 C8 22.5 5.5 22.5 4 21Z" fill="#f8e4cc" stroke="#a8621a" stroke-width="1.2"/><path d="M7 13 L10 16 M9 11 L12 14" stroke="#c88a4a" stroke-width="0.8"/></svg>
<svg class="a" style="left:42px;top:217.5px" width="24" height="24"><path d="M13 13 L22.5 3.5" stroke="#3a3a3a" stroke-width="2.6" stroke-linecap="round"/><circle cx="9.7" cy="14.3" r="6" fill="#474a4a" stroke="#2a2a2a" stroke-width="0.8"/></svg>
<!--/ICONS-->
<!--TOOLOPT-->
<div class="a" style="left:114px;top:252px;width:37px;height:27px;background:#000;border:1px solid #8d8983;z-index:2"></div>
<div class="a" style="left:129px;top:265px;width:38px;height:28px;background:#fff;border:1px solid #8d8983"></div>
<div class="a" style="left:117px;top:285px;width:8px;height:8px;background:#fff;border:1px solid #8d8983"></div>
<div class="a" style="left:113px;top:281px;width:7px;height:7px;background:#000;border:1px solid #8d8983"></div>
<svg class="a" style="left:154px;top:250px" width="14" height="14"><path d="M2 4 L5 1 L5 3 L9 3 C11 3 12 5 12 7 L12 9 L13.5 9 L10.5 12.5 L7.5 9 L9 9 L9 7 C9 6 8.5 5.5 8 5.5 L5 5.5 L5 7.5 Z" fill="#fff" stroke="#888" stroke-width="0.9"/></svg>
<!-- tab -->
<div class="a" style="left:3px;top:327px;width:275px;height:549px;border:1px solid #a9a6a2;border-left-color:#8d8b88;border-radius:0 3px 3px 0;background:#f1f0ee"></div>
<div class="a" style="left:3px;top:295px;width:166px;height:33px;border:1px solid #7d9cc6;border-bottom:none;border-radius:4px 4px 0 0;background:linear-gradient(#f8f8f7,#f1f0ee);"></div>
<div class="a" style="left:4px;top:296px;width:164px;height:4px;border-radius:3px 3px 0 0;background:linear-gradient(#8eb0de,#6b93cc)"></div>
<div class="a" style="left:4px;top:327px;width:164px;height:2px;background:#f1f0ee"></div>
<svg class="a" style="left:10px;top:304px" width="18" height="17"><rect x="0.5" y="0.5" width="17" height="16" fill="#f4f4f4" stroke="#999"/><rect x="3" y="4" width="4" height="4" fill="#888"/><rect x="4" y="8" width="2" height="6" fill="#666"/><rect x="10" y="3" width="2" height="4" fill="#666"/><rect x="9" y="7" width="4" height="5" fill="#fff" stroke="#666" stroke-width="1"/><rect x="10" y="12" width="2" height="3" fill="#666"/></svg>
<div class="t" style="left:33px;top:306px;font-size:11.5px;letter-spacing:0.5px">Werkzeugeinstellungen</div>
<svg class="a" style="left:260px;top:305px" width="11" height="11"><rect x="0.5" y="0.5" width="10" height="10" rx="2" fill="#f4f3f1" stroke="#777"/><path d="M3 5.5 L7.5 2.5 L7.5 8.5Z" fill="#666"/></svg>
<div class="t" style="left:8px;top:331px;font-size:11.5px;font-weight:bold;letter-spacing:0.95px">Ausrichten</div>
<div class="t" style="left:8px;top:346px;font-size:11.5px;letter-spacing:0.72px">Ausrichten</div>
<div class="t" style="left:24px;top:367px;font-size:11.5px;letter-spacing:0.7px">Relativ zu:</div>
<div class="a" style="left:41px;top:384px;width:231px;height:25px;border:1px solid #a4a19d;border-radius:3px;background:linear-gradient(#fbfbfa,#e9e8e6)"></div>
<div class="a" style="left:251px;top:388px;width:1px;height:17px;background:#c4c1bd"></div>
<div class="t" style="left:47px;top:390px;font-size:11.5px;letter-spacing:0.5px">Erstes Objekt</div>
<svg class="a" style="left:255px;top:388px" width="10" height="16"><path d="M2 6 L5 2.5 L8 6 M2 10 L5 13.5 L8 10" fill="none" stroke="#222" stroke-width="1.4"/></svg>
<svg width="0" height="0" style="position:absolute"><defs><filter id="sh1"><feGaussianBlur stdDeviation="0.7"/></filter></defs></svg>
<div class="a" style="left:25px;top:417px;width:32px;height:32px;border:1px solid #8f8d89;border-radius:4px;background:linear-gradient(#fdfdfc,#e6e5e3)"></div><svg class="a" style="left:25px;top:417px" width="32" height="32"><g transform="translate(1 1)" opacity="0.22" filter="url(#sh1)"><rect x="7.5" y="7.5" width="3.2" height="16.5" rx="1.4" fill="#fff" stroke="#000" stroke-width="1.3"/><path d="M11 15.7 L16.8 9.6 L16.8 13.4 L24.5 13.4 Q25.2 13.4 25.2 14.2 L25.2 17.2 Q25.2 18 24.5 18 L16.8 18 L16.8 21.8 Z" fill="#fff" stroke="#000" stroke-width="1.3" stroke-linejoin="round"/></g><rect x="7.5" y="7.5" width="3.2" height="16.5" rx="1.4" fill="#fff" stroke="#000" stroke-width="1.3"/><path d="M11 15.7 L16.8 9.6 L16.8 13.4 L24.5 13.4 Q25.2 13.4 25.2 14.2 L25.2 17.2 Q25.2 18 24.5 18 L16.8 18 L16.8 21.8 Z" fill="#fff" stroke="#000" stroke-width="1.3" stroke-linejoin="round"/></svg>
<div class="a" style="left:65px;top:417px;width:32px;height:32px;border:1px solid #8f8d89;border-radius:4px;background:linear-gradient(#fdfdfc,#e6e5e3)"></div><svg class="a" style="left:65px;top:417px" width="32" height="32"><g transform="translate(1 1)" opacity="0.22" filter="url(#sh1)"><rect x="14.4" y="7.5" width="3.2" height="16.5" rx="1.4" fill="#fff" stroke="#000" stroke-width="1.3"/><path d="M14.3 14.3 L14.3 16.9 L8.8 21.6 L8.8 17.7 L6.6 17.7 L6.6 13.4 L8.8 13.4 L8.8 9.4 Z" fill="#fff" stroke="#000" stroke-width="1.3" stroke-linejoin="round"/><path d="M17.7 14.3 L17.7 16.9 L23.2 21.6 L23.2 17.7 L25.4 17.7 L25.4 13.4 L23.2 13.4 L23.2 9.4 Z" fill="#fff" stroke="#000" stroke-width="1.3" stroke-linejoin="round"/></g><rect x="14.4" y="7.5" width="3.2" height="16.5" rx="1.4" fill="#fff" stroke="#000" stroke-width="1.3"/><path d="M14.3 14.3 L14.3 16.9 L8.8 21.6 L8.8 17.7 L6.6 17.7 L6.6 13.4 L8.8 13.4 L8.8 9.4 Z" fill="#fff" stroke="#000" stroke-width="1.3" stroke-linejoin="round"/><path d="M17.7 14.3 L17.7 16.9 L23.2 21.6 L23.2 17.7 L25.4 17.7 L25.4 13.4 L23.2 13.4 L23.2 9.4 Z" fill="#fff" stroke="#000" stroke-width="1.3" stroke-linejoin="round"/></svg>
<div class="a" style="left:105px;top:417px;width:32px;height:32px;border:1px solid #8f8d89;border-radius:4px;background:linear-gradient(#fdfdfc,#e6e5e3)"></div><svg class="a" style="left:105px;top:417px" width="32" height="32"><g transform="translate(1 1)" opacity="0.22" filter="url(#sh1)"><g transform="translate(32 0) scale(-1 1)"><rect x="7.5" y="7.5" width="3.2" height="16.5" rx="1.4" fill="#fff" stroke="#000" stroke-width="1.3"/><path d="M11 15.7 L16.8 9.6 L16.8 13.4 L24.5 13.4 Q25.2 13.4 25.2 14.2 L25.2 17.2 Q25.2 18 24.5 18 L16.8 18 L16.8 21.8 Z" fill="#fff" stroke="#000" stroke-width="1.3" stroke-linejoin="round"/></g></g><g transform="translate(32 0) scale(-1 1)"><rect x="7.5" y="7.5" width="3.2" height="16.5" rx="1.4" fill="#fff" stroke="#000" stroke-width="1.3"/><path d="M11 15.7 L16.8 9.6 L16.8 13.4 L24.5 13.4 Q25.2 13.4 25.2 14.2 L25.2 17.2 Q25.2 18 24.5 18 L16.8 18 L16.8 21.8 Z" fill="#fff" stroke="#000" stroke-width="1.3" stroke-linejoin="round"/></g></svg>
<div class="a" style="left:25px;top:457px;width:32px;height:32px;border:1px solid #8f8d89;border-radius:4px;background:linear-gradient(#fdfdfc,#e6e5e3)"></div><svg class="a" style="left:25px;top:457px" width="32" height="32"><g transform="translate(1 1)" opacity="0.22" filter="url(#sh1)"><g transform="translate(32 0) rotate(90)"><rect x="7.5" y="7.5" width="3.2" height="16.5" rx="1.4" fill="#fff" stroke="#000" stroke-width="1.3"/><path d="M11 15.7 L16.8 9.6 L16.8 13.4 L24.5 13.4 Q25.2 13.4 25.2 14.2 L25.2 17.2 Q25.2 18 24.5 18 L16.8 18 L16.8 21.8 Z" fill="#fff" stroke="#000" stroke-width="1.3" stroke-linejoin="round"/></g></g><g transform="translate(32 0) rotate(90)"><rect x="7.5" y="7.5" width="3.2" height="16.5" rx="1.4" fill="#fff" stroke="#000" stroke-width="1.3"/><path d="M11 15.7 L16.8 9.6 L16.8 13.4 L24.5 13.4 Q25.2 13.4 25.2 14.2 L25.2 17.2 Q25.2 18 24.5 18 L16.8 18 L16.8 21.8 Z" fill="#fff" stroke="#000" stroke-width="1.3" stroke-linejoin="round"/></g></svg>
<div class="a" style="left:65px;top:457px;width:32px;height:32px;border:1px solid #8f8d89;border-radius:4px;background:linear-gradient(#fdfdfc,#e6e5e3)"></div><svg class="a" style="left:65px;top:457px" width="32" height="32"><g transform="translate(1 1)" opacity="0.22" filter="url(#sh1)"><g transform="translate(32 0) rotate(90)"><rect x="14.4" y="7.5" width="3.2" height="16.5" rx="1.4" fill="#fff" stroke="#000" stroke-width="1.3"/><path d="M14.3 14.3 L14.3 16.9 L8.8 21.6 L8.8 17.7 L6.6 17.7 L6.6 13.4 L8.8 13.4 L8.8 9.4 Z" fill="#fff" stroke="#000" stroke-width="1.3" stroke-linejoin="round"/><path d="M17.7 14.3 L17.7 16.9 L23.2 21.6 L23.2 17.7 L25.4 17.7 L25.4 13.4 L23.2 13.4 L23.2 9.4 Z" fill="#fff" stroke="#000" stroke-width="1.3" stroke-linejoin="round"/></g></g><g transform="translate(32 0) rotate(90)"><rect x="14.4" y="7.5" width="3.2" height="16.5" rx="1.4" fill="#fff" stroke="#000" stroke-width="1.3"/><path d="M14.3 14.3 L14.3 16.9 L8.8 21.6 L8.8 17.7 L6.6 17.7 L6.6 13.4 L8.8 13.4 L8.8 9.4 Z" fill="#fff" stroke="#000" stroke-width="1.3" stroke-linejoin="round"/><path d="M17.7 14.3 L17.7 16.9 L23.2 21.6 L23.2 17.7 L25.4 17.7 L25.4 13.4 L23.2 13.4 L23.2 9.4 Z" fill="#fff" stroke="#000" stroke-width="1.3" stroke-linejoin="round"/></g></svg>
<div class="a" style="left:105px;top:457px;width:32px;height:32px;border:1px solid #8f8d89;border-radius:4px;background:linear-gradient(#fdfdfc,#e6e5e3)"></div><svg class="a" style="left:105px;top:457px" width="32" height="32"><g transform="translate(1 1)" opacity="0.22" filter="url(#sh1)"><g transform="translate(0 32) rotate(-90)"><rect x="7.5" y="7.5" width="3.2" height="16.5" rx="1.4" fill="#fff" stroke="#000" stroke-width="1.3"/><path d="M11 15.7 L16.8 9.6 L16.8 13.4 L24.5 13.4 Q25.2 13.4 25.2 14.2 L25.2 17.2 Q25.2 18 24.5 18 L16.8 18 L16.8 21.8 Z" fill="#fff" stroke="#000" stroke-width="1.3" stroke-linejoin="round"/></g></g><g transform="translate(0 32) rotate(-90)"><rect x="7.5" y="7.5" width="3.2" height="16.5" rx="1.4" fill="#fff" stroke="#000" stroke-width="1.3"/><path d="M11 15.7 L16.8 9.6 L16.8 13.4 L24.5 13.4 Q25.2 13.4 25.2 14.2 L25.2 17.2 Q25.2 18 24.5 18 L16.8 18 L16.8 21.8 Z" fill="#fff" stroke="#000" stroke-width="1.3" stroke-linejoin="round"/></g></svg>
<div class="t" style="left:8px;top:494px;font-size:11.5px;letter-spacing:0.8px">Verteilen</div>
<div class="a" style="left:25px;top:510px;width:32px;height:32px;border:1px solid #6d8fc0;border-radius:4px;background:linear-gradient(#fbfcfd,#dfe3e8)"></div><svg class="a" style="left:25px;top:510px" width="32" height="32"><g transform="translate(1 1)" opacity="0.22" filter="url(#sh1)"><rect x="7.5" y="7.5" width="3.2" height="16.5" rx="1.4" fill="#fff" stroke="#000" stroke-width="1.3"/><path d="M11 15.7 L16.8 9.6 L16.8 13.4 L24.5 13.4 Q25.2 13.4 25.2 14.2 L25.2 17.2 Q25.2 18 24.5 18 L16.8 18 L16.8 21.8 Z" fill="#fff" stroke="#000" stroke-width="1.3" stroke-linejoin="round"/></g><rect x="7.5" y="7.5" width="3.2" height="16.5" rx="1.4" fill="#fff" stroke="#000" stroke-width="1.3"/><path d="M11 15.7 L16.8 9.6 L16.8 13.4 L24.5 13.4 Q25.2 13.4 25.2 14.2 L25.2 17.2 Q25.2 18 24.5 18 L16.8 18 L16.8 21.8 Z" fill="#fff" stroke="#000" stroke-width="1.3" stroke-linejoin="round"/></svg>
<div class="a" style="left:65px;top:510px;width:32px;height:32px;border:1px solid #8f8d89;border-radius:4px;background:linear-gradient(#fdfdfc,#e6e5e3)"></div><svg class="a" style="left:65px;top:510px" width="32" height="32"><g transform="translate(1 1)" opacity="0.22" filter="url(#sh1)"><rect x="14.4" y="7.5" width="3.2" height="16.5" rx="1.4" fill="#fff" stroke="#000" stroke-width="1.3"/><path d="M14.3 14.3 L14.3 16.9 L8.8 21.6 L8.8 17.7 L6.6 17.7 L6.6 13.4 L8.8 13.4 L8.8 9.4 Z" fill="#fff" stroke="#000" stroke-width="1.3" stroke-linejoin="round"/><path d="M17.7 14.3 L17.7 16.9 L23.2 21.6 L23.2 17.7 L25.4 17.7 L25.4 13.4 L23.2 13.4 L23.2 9.4 Z" fill="#fff" stroke="#000" stroke-width="1.3" stroke-linejoin="round"/></g><rect x="14.4" y="7.5" width="3.2" height="16.5" rx="1.4" fill="#fff" stroke="#000" stroke-width="1.3"/><path d="M14.3 14.3 L14.3 16.9 L8.8 21.6 L8.8 17.7 L6.6 17.7 L6.6 13.4 L8.8 13.4 L8.8 9.4 Z" fill="#fff" stroke="#000" stroke-width="1.3" stroke-linejoin="round"/><path d="M17.7 14.3 L17.7 16.9 L23.2 21.6 L23.2 17.7 L25.4 17.7 L25.4 13.4 L23.2 13.4 L23.2 9.4 Z" fill="#fff" stroke="#000" stroke-width="1.3" stroke-linejoin="round"/></svg>
<div class="a" style="left:105px;top:510px;width:32px;height:32px;border:1px solid #8f8d89;border-radius:4px;background:linear-gradient(#fdfdfc,#e6e5e3)"></div><svg class="a" style="left:105px;top:510px" width="32" height="32"><g transform="translate(1 1)" opacity="0.22" filter="url(#sh1)"><g transform="translate(32 0) scale(-1 1)"><rect x="7.5" y="7.5" width="3.2" height="16.5" rx="1.4" fill="#fff" stroke="#000" stroke-width="1.3"/><path d="M11 15.7 L16.8 9.6 L16.8 13.4 L24.5 13.4 Q25.2 13.4 25.2 14.2 L25.2 17.2 Q25.2 18 24.5 18 L16.8 18 L16.8 21.8 Z" fill="#fff" stroke="#000" stroke-width="1.3" stroke-linejoin="round"/></g></g><g transform="translate(32 0) scale(-1 1)"><rect x="7.5" y="7.5" width="3.2" height="16.5" rx="1.4" fill="#fff" stroke="#000" stroke-width="1.3"/><path d="M11 15.7 L16.8 9.6 L16.8 13.4 L24.5 13.4 Q25.2 13.4 25.2 14.2 L25.2 17.2 Q25.2 18 24.5 18 L16.8 18 L16.8 21.8 Z" fill="#fff" stroke="#000" stroke-width="1.3" stroke-linejoin="round"/></g></svg>
<div class="a" style="left:25px;top:550px;width:32px;height:32px;border:1px solid #8f8d89;border-radius:4px;background:linear-gradient(#fdfdfc,#e6e5e3)"></div><svg class="a" style="left:25px;top:550px" width="32" height="32"><g transform="translate(1 1)" opacity="0.22" filter="url(#sh1)"><g transform="translate(32 0) rotate(90)"><rect x="7.5" y="7.5" width="3.2" height="16.5" rx="1.4" fill="#fff" stroke="#000" stroke-width="1.3"/><path d="M11 15.7 L16.8 9.6 L16.8 13.4 L24.5 13.4 Q25.2 13.4 25.2 14.2 L25.2 17.2 Q25.2 18 24.5 18 L16.8 18 L16.8 21.8 Z" fill="#fff" stroke="#000" stroke-width="1.3" stroke-linejoin="round"/></g></g><g transform="translate(32 0) rotate(90)"><rect x="7.5" y="7.5" width="3.2" height="16.5" rx="1.4" fill="#fff" stroke="#000" stroke-width="1.3"/><path d="M11 15.7 L16.8 9.6 L16.8 13.4 L24.5 13.4 Q25.2 13.4 25.2 14.2 L25.2 17.2 Q25.2 18 24.5 18 L16.8 18 L16.8 21.8 Z" fill="#fff" stroke="#000" stroke-width="1.3" stroke-linejoin="round"/></g></svg>
<div class="a" style="left:65px;top:550px;width:32px;height:32px;border:1px solid #8f8d89;border-radius:4px;background:linear-gradient(#fdfdfc,#e6e5e3)"></div><svg class="a" style="left:65px;top:550px" width="32" height="32"><g transform="translate(1 1)" opacity="0.22" filter="url(#sh1)"><g transform="translate(32 0) rotate(90)"><rect x="14.4" y="7.5" width="3.2" height="16.5" rx="1.4" fill="#fff" stroke="#000" stroke-width="1.3"/><path d="M14.3 14.3 L14.3 16.9 L8.8 21.6 L8.8 17.7 L6.6 17.7 L6.6 13.4 L8.8 13.4 L8.8 9.4 Z" fill="#fff" stroke="#000" stroke-width="1.3" stroke-linejoin="round"/><path d="M17.7 14.3 L17.7 16.9 L23.2 21.6 L23.2 17.7 L25.4 17.7 L25.4 13.4 L23.2 13.4 L23.2 9.4 Z" fill="#fff" stroke="#000" stroke-width="1.3" stroke-linejoin="round"/></g></g><g transform="translate(32 0) rotate(90)"><rect x="14.4" y="7.5" width="3.2" height="16.5" rx="1.4" fill="#fff" stroke="#000" stroke-width="1.3"/><path d="M14.3 14.3 L14.3 16.9 L8.8 21.6 L8.8 17.7 L6.6 17.7 L6.6 13.4 L8.8 13.4 L8.8 9.4 Z" fill="#fff" stroke="#000" stroke-width="1.3" stroke-linejoin="round"/><path d="M17.7 14.3 L17.7 16.9 L23.2 21.6 L23.2 17.7 L25.4 17.7 L25.4 13.4 L23.2 13.4 L23.2 9.4 Z" fill="#fff" stroke="#000" stroke-width="1.3" stroke-linejoin="round"/></g></svg>
<div class="a" style="left:105px;top:550px;width:32px;height:32px;border:1px solid #8f8d89;border-radius:4px;background:linear-gradient(#fdfdfc,#e6e5e3)"></div><svg class="a" style="left:105px;top:550px" width="32" height="32"><g transform="translate(1 1)" opacity="0.22" filter="url(#sh1)"><g transform="translate(0 32) rotate(-90)"><rect x="7.5" y="7.5" width="3.2" height="16.5" rx="1.4" fill="#fff" stroke="#000" stroke-width="1.3"/><path d="M11 15.7 L16.8 9.6 L16.8 13.4 L24.5 13.4 Q25.2 13.4 25.2 14.2 L25.2 17.2 Q25.2 18 24.5 18 L16.8 18 L16.8 21.8 Z" fill="#fff" stroke="#000" stroke-width="1.3" stroke-linejoin="round"/></g></g><g transform="translate(0 32) rotate(-90)"><rect x="7.5" y="7.5" width="3.2" height="16.5" rx="1.4" fill="#fff" stroke="#000" stroke-width="1.3"/><path d="M11 15.7 L16.8 9.6 L16.8 13.4 L24.5 13.4 Q25.2 13.4 25.2 14.2 L25.2 17.2 Q25.2 18 24.5 18 L16.8 18 L16.8 21.8 Z" fill="#fff" stroke="#000" stroke-width="1.3" stroke-linejoin="round"/></g></svg>
<div class="t" style="left:24px;top:594px;font-size:11.5px;letter-spacing:0.8px">Versatz:</div>
<div class="a" style="left:77px;top:590px;width:71px;height:21px;border:1px solid #8f8c88;border-radius:3px;background:#fff"></div>
<div class="a" style="left:135px;top:591px;width:12px;height:19px;border-left:1px solid #c4c1bd;background:linear-gradient(#f6f6f5,#e2e1de)"></div>
<svg class="a" style="left:136px;top:592px" width="11" height="17"><path d="M3 6 L5.5 3.5 L8 6 M3 11 L5.5 13.5 L8 11" fill="none" stroke="#333" stroke-width="1"/><path d="M1 8.5 L10 8.5" stroke="#b0aeab" stroke-width="0.8"/></svg>
<div class="t" style="left:80px;top:594px;font-size:11.5px;letter-spacing:0.5px">45</div>
<!-- bottom buttons -->
<svg class="a" style="left:32px;top:850px" width="16" height="16"><path d="M1 1 L15 1 L15 15 L1 15 Z" fill="#333"/><rect x="3.5" y="2" width="9" height="5" fill="#dfe6f0"/><rect x="4" y="3" width="8" height="0.8" fill="#8aa"/><rect x="4" y="5" width="8" height="0.8" fill="#8aa"/><rect x="4.5" y="10" width="7" height="5" fill="#aaa"/><rect x="6" y="11" width="2" height="3" fill="#333"/></svg>
<svg class="a" style="left:97px;top:849px" width="18" height="18"><path d="M4.5 1.5 L15.5 1.5 L15.5 15.5 L4.5 15.5Z" fill="#f6f6f6" stroke="#d2d0cd" stroke-width="1"/><path d="M4 9 C6 5 12 5 13 9 C14 13 10 15 8 14" fill="none" stroke="#cfcdca" stroke-width="2"/><path d="M1.5 6.5 L6.5 11 L2 12Z" fill="#cfcdca"/></svg>
<svg class="a" style="left:164px;top:851px" width="14" height="14"><path d="M2 2 L12 12 M12 2 L2 12" stroke="#c2c0bd" stroke-width="3"/></svg>
<svg class="a" style="left:228px;top:847px" width="22" height="22"><path d="M11.2 16.2 L18.5 16.2 L18.5 4 L6.5 4 L6.5 9" fill="none" stroke="#b89000" stroke-width="4" stroke-linejoin="round"/><path d="M11.2 16.2 L18.5 16.2 L18.5 4 L6.5 4 L6.5 9" fill="none" stroke="#f6e030" stroke-width="2.4" stroke-linejoin="round"/><path d="M2.8 8.3 L10.2 8.3 L6.5 12.3Z" fill="#f6e030" stroke="#b89000" stroke-width="0.9" stroke-linejoin="round"/><circle cx="7" cy="15.9" r="3" fill="#2a4e9a"/><circle cx="6.6" cy="15.3" r="1.3" fill="#8aa0c8"/></svg>
<!--/TOOLOPT-->
<!--BADGES-->
<svg class="a" style="left:0;top:0;z-index:50" width="1324" height="879"><defs><radialGradient id="bg" cx="0.65" cy="0.6" r="0.6"><stop offset="0" stop-color="#ff2a22"/><stop offset="0.7" stop-color="#e01818"/><stop offset="1" stop-color="#b00c0c"/></radialGradient><filter id="bl" x="-50%" y="-50%" width="200%" height="200%"><feGaussianBlur stdDeviation="1.9"/></filter></defs>
<circle cx="1117.0" cy="35.6" r="9" fill="#000" opacity="0.75" filter="url(#bl)"/><circle cx="1114.5" cy="33.1" r="9.6" fill="url(#bg)"/><text x="1114.0" y="39.8" text-anchor="middle" font-family="Liberation Sans" font-weight="bold" font-size="16.5" fill="#fff" stroke="#fff" stroke-width="0.5" transform="translate(1114.0 0) scale(1.2 1) translate(-1114.0 0)">1</text>
<circle cx="180.8" cy="120.9" r="9" fill="#000" opacity="0.75" filter="url(#bl)"/><circle cx="178.3" cy="118.4" r="9.6" fill="url(#bg)"/><text x="177.8" y="125.1" text-anchor="middle" font-family="Liberation Sans" font-weight="bold" font-size="16.5" fill="#fff" stroke="#fff" stroke-width="0.5" transform="translate(177.8 0) scale(1.2 1) translate(-177.8 0)">2</text>
<circle cx="423.9" cy="344.4" r="9" fill="#000" opacity="0.75" filter="url(#bl)"/><circle cx="421.4" cy="341.9" r="9.6" fill="url(#bg)"/><text x="420.9" y="348.6" text-anchor="middle" font-family="Liberation Sans" font-weight="bold" font-size="16.5" fill="#fff" stroke="#fff" stroke-width="0.5" transform="translate(420.9 0) scale(1.2 1) translate(-420.9 0)">3</text>
<circle cx="169.0" cy="610.0" r="9" fill="#000" opacity="0.75" filter="url(#bl)"/><circle cx="166.5" cy="607.5" r="9.6" fill="url(#bg)"/><text x="166.0" y="614.2" text-anchor="middle" font-family="Liberation Sans" font-weight="bold" font-size="16.5" fill="#fff" stroke="#fff" stroke-width="0.5" transform="translate(166.0 0) scale(1.2 1) translate(-166.0 0)">4</text>
<circle cx="18.8" cy="526.9" r="9" fill="#000" opacity="0.75" filter="url(#bl)"/><circle cx="16.3" cy="524.4" r="9.6" fill="url(#bg)"/><text x="15.8" y="531.1" text-anchor="middle" font-family="Liberation Sans" font-weight="bold" font-size="16.5" fill="#fff" stroke="#fff" stroke-width="0.5" transform="translate(15.8 0) scale(1.2 1) translate(-15.8 0)">5</text>
</svg>
<!--/BADGES-->
</body></html>
